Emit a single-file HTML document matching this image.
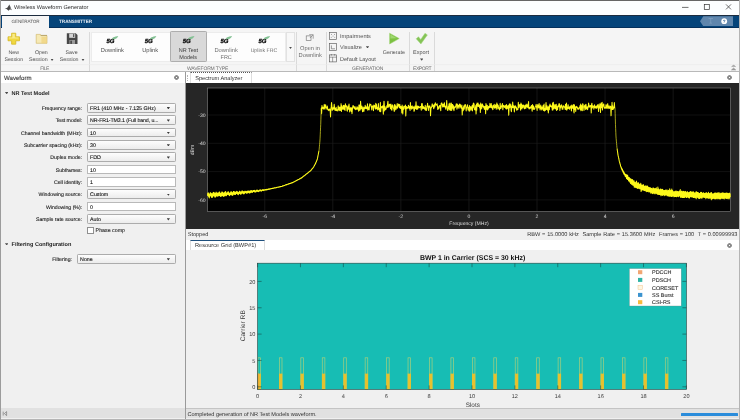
<!DOCTYPE html>
<html lang="en">
<head>
<meta charset="utf-8">
<title>Wireless Waveform Generator</title>
<style>
html,body{margin:0;padding:0;}
body{width:740px;height:420px;overflow:hidden;background:#f0f0f0;position:relative;
 font-family:"Liberation Sans",sans-serif;color:#3a3a3a;font-size:5.2px;line-height:1;text-rendering:geometricPrecision;}
div,span,i{position:absolute;box-sizing:border-box;white-space:nowrap;}
svg{position:absolute;left:0;top:0;overflow:visible;}
/* title bar */
#title{left:0;top:0;width:740px;height:15px;background:#fcfeff;border-top:0.9px solid #666;}
#title .t{left:14px;top:4.7px;font-size:5.55px;color:#2b2b2b;}
/* tab bar */
#tabs{left:0;top:14.6px;width:740px;height:13px;background:#05447a;border-top:1px solid #1c2c3f;border-bottom:0.9px solid #04305c;}
#tabs .g{left:2px;top:0;width:47px;height:13px;margin-top:0.2px;background:#f5f5f5;color:#555;font-size:4.6px;text-align:center;line-height:11.4px;letter-spacing:-0.05px;}
#tabs .tr{left:59px;top:0;height:13px;color:#e8eef5;font-size:4.7px;line-height:11.4px;font-weight:bold;letter-spacing:-0.05px;}
#qa{left:700px;top:16.2px;width:33px;height:10px;background:#5f86ad;clip-path:polygon(0 50%,10% 0,100% 0,100% 100%,10% 100%);}
/* toolstrip */
#strip{left:0;top:28px;width:740px;height:44px;background:#f5f5f5;border-bottom:1px solid #b9b9b9;}
.sep{top:32px;width:1px;height:39px;background:#dadada;}
.btxt{font-size:5.25px;color:#505050;text-align:center;transform:translateX(-50%);}
.sec{font-size:5.0px;color:#6c6c6c;top:66.6px;transform:translateX(-50%);letter-spacing:-0.02px;}
.dn{width:3.4px;height:2.3px;background:#4a4a4a;clip-path:polygon(0 0,100% 0,50% 100%);}
#gal{left:90.5px;top:31.5px;width:195px;height:30.7px;background:#fdfdfd;border:0.5px solid #ececec;}
#galbtn{left:285.5px;top:31.5px;width:9.5px;height:30.7px;background:#f8f8f8;border:0.5px solid #e2e2e2;}
#sel{left:169.6px;top:31.4px;width:37.6px;height:30.8px;background:#d9d9d9;border:0.6px solid #aeaeae;border-radius:1.2px;}
.g5{font-size:6px;font-weight:bold;font-style:italic;color:#050505;letter-spacing:-0.1px;-webkit-text-stroke:0.35px #111;}
/* panels */
#lhead{left:1px;top:72px;width:184px;height:10.5px;background:#fff;}
#lhead .t{left:3px;top:4.3px;font-size:6.1px;color:#333;-webkit-text-stroke:0.12px #444;}
#lborder{left:0;top:0;width:1.1px;height:420px;background:#9c9c9c;z-index:5;}
#rborder{left:739px;top:0;width:1px;height:420px;background:#b4b4b4;z-index:5;}
#lsplit{left:184.6px;top:72px;width:1.2px;height:348px;background:#9a9a9a;}
#lfoot{left:1px;top:408.3px;width:184px;height:10px;background:#e1e1e1;}
#bottomline{left:0;top:418.7px;width:740px;height:1.3px;background:#b5b5b5;}
.h{font-weight:bold;font-size:5.55px;color:#222;left:11.5px;}
.tri{left:4.9px;width:3.6px;height:2.3px;background:#4a4a4a;clip-path:polygon(0 0,100% 0,50% 100%);}
.lab{left:0;width:82.1px;text-align:right;font-size:5.17px;color:#111;-webkit-text-stroke:0.12px #333;height:9.5px;line-height:9.9px;padding-top:2px;}
.fld{left:87px;width:88.6px;height:9.5px;font-size:5.25px;color:#0a0a0a;-webkit-text-stroke:0.1px #222;line-height:9.3px;}
.fld span{left:2.1px;top:1px;}
.dd{background:linear-gradient(#fdfdfd,#ececec);border:0.6px solid #acacac;border-radius:1.2px;}
.ed{background:#fff;border:0.55px solid #b9b9b9;}
.arr{right:4.6px;top:3.1px;width:3.3px;height:2.3px;background:#3a3a3a;clip-path:polygon(0 0,100% 0,50% 100%);}
/* right side */
#rtab1{left:186px;top:72px;width:554px;height:11px;background:#fff;}
#tabSA{left:190px;top:72.4px;width:61.5px;height:10.6px;background:#fff;border:0.5px solid #dedede;border-bottom:none;border-top:0.8px dotted #555;}
#tabSA .t{left:4.2px;top:3.5px;color:#444;font-size:5.62px;color:#333;}
#spec{left:186px;top:83px;width:552.8px;height:146px;background:#262626;}
#stat1{left:186px;top:229px;width:554px;height:11px;background:#f0f0f0;}
#stat1 .l{left:1.7px;top:3.8px;font-size:5.55px;color:#333;}
#stat1 .r{right:2.6px;top:3.8px;font-size:5.6px;word-spacing:0.25px;color:#333;}
#rtab2{left:186px;top:240px;width:554px;height:10.1px;background:#fff;}
#tabRG{left:190px;top:240px;width:74.6px;height:10.1px;background:#fff;border:0.5px solid #dedede;border-bottom:none;border-top:1.3px solid #1e4f7d;}
#tabRG .t{left:3.9px;top:3.2px;font-size:5.7px;color:#333;}
#stat2{left:186px;top:408.3px;width:554px;height:10px;background:#e1e1e1;border-top:0.6px solid #c4c4c4;}
#stat2 .l{left:1.4px;top:3.5px;font-size:5.59px;color:#333;}
#prog{left:681.2px;top:413.2px;width:56.4px;height:2.5px;background:#2a8cdb;border-radius:0.6px;}
.gear{width:5.4px;height:5.4px;border-radius:50%;margin:-0.4px 0 0 -0.4px;background:radial-gradient(circle,#fff 0,#fff 0.55px,#8a8a8a 0.95px,#8a8a8a 2.15px,rgba(138,138,138,0) 2.6px);}
svg text{font-family:"Liberation Sans",sans-serif;text-rendering:geometricPrecision;}
</style>
</head>
<body>
<div id="wrap" style="left:0;top:0;width:740px;height:420px;will-change:transform;">
<!-- title bar -->
<div id="title">
  <svg width="740" height="15" viewBox="0 0 740 15">
    <path d="M4.8 7.7 L7.3 6.7 L9.4 3.5 L11.7 9.3 L10 8.3 L8.6 9.7 L6.6 8 Z" fill="#484848"/>
    <path d="M9.4 3.5 L11.7 9.3 L10.2 7.4 Z" fill="#8a8a8a"/>
    <line x1="682" y1="6.4" x2="688.5" y2="6.4" stroke="#333" stroke-width="0.7"/>
    <rect x="704.3" y="3.4" width="5" height="5" fill="none" stroke="#333" stroke-width="0.7"/>
    <path d="M726 3.4 L731 8.4 M731 3.4 L726 8.4" stroke="#333" stroke-width="0.7" fill="none"/>
  </svg>
  <span class="t">Wireless Waveform Generator</span>
</div>
<!-- tab bar -->
<div id="tabs">
  <div class="g">GENERATOR</div>
  <div class="tr">TRANSMITTER</div>
</div>
<div id="qa"></div>
<svg width="740" height="420" viewBox="0 0 740 420" style="z-index:3">
  <circle cx="724.2" cy="21.2" r="2.9" fill="#fff"/>
  <text x="724.2" y="22.9" font-size="4.6" font-weight="bold" text-anchor="middle" fill="#3c6a9a">?</text>
  <path d="M708.5 18.5 h4.5 M710.7 18.5 v4.5 M709.4 23.2 h2.6" stroke="#7fa0c2" stroke-width="0.7" fill="none"/>
</svg>

<!-- toolstrip -->
<div id="strip"></div>
<div id="gal"></div>
<div id="galbtn"></div>
<div id="sel"></div>
<div class="sep" style="left:88.5px"></div>
<div class="sep" style="left:295.6px"></div>
<div class="sep" style="left:325.6px"></div>
<div class="sep" style="left:409.3px"></div>
<div class="sep" style="left:434px"></div>

<svg width="740" height="420" viewBox="0 0 740 420" style="z-index:2">
  <!-- New: yellow plus -->
  <path d="M11.6 33.2 h4.2 v3.6 h3.7 v4 h-3.7 v3.4 h-4.2 v-3.4 h-3.6 v-4 h3.6 z" fill="#f0d840" stroke="#d2b318" stroke-width="0.7"/>
  <path d="M12.4 34 h2.4 v3.6 h3.6 v1 h-9.6 v-1 h3.6 z" fill="#faf0a0" opacity="0.8"/>
  <!-- Open: folder -->
  <path d="M36.2 34.4 h4.2 l1 1.3 h5.6 v7.6 h-10.8 z" fill="#f6e9b4" stroke="#cdb160" stroke-width="0.6"/>
  <path d="M40.6 35.4 h6.4" stroke="#a89250" stroke-width="0.7"/>
  <path d="M41.4 37 h5.6 v6.3 h-5.6 z" fill="#efd27a" opacity="0.7"/>
  <!-- Save: floppy -->
  <path d="M66.8 33.3 h9 l1.7 1.7 v8.9 h-10.7 z" fill="#474747"/>
  <rect x="69.2" y="33.6" width="6" height="4.2" fill="#d6d6d6"/>
  <rect x="73" y="34.1" width="1.3" height="2.9" fill="#5a5a5a"/>
  <rect x="69.4" y="40" width="5.6" height="3.9" fill="#9b9b9b"/>
  <rect x="70.3" y="40.7" width="1.7" height="3.2" fill="#4a4a4a"/>
  <!-- 5G swooshes -->
  <g fill="#82c092">
    <path d="M111.7 39.6 L112.9 37.5 Q115.6 36.2 118.3 36.1 Q117.6 37.6 116.0 38.7 Z"/>
    <path d="M149.8 39.6 L151.0 37.5 Q153.7 36.2 156.4 36.1 Q155.7 37.6 154.1 38.7 Z"/>
    <path d="M187.9 39.6 L189.1 37.5 Q191.8 36.2 194.5 36.1 Q193.8 37.6 192.2 38.7 Z"/>
    <path d="M225.5 39.6 L226.7 37.5 Q229.4 36.2 232.1 36.1 Q231.4 37.6 229.8 38.7 Z"/>
    <path d="M263.5 39.6 L264.7 37.5 Q267.4 36.2 270.1 36.1 Q269.4 37.6 267.8 38.7 Z"/>
  </g>
  <!-- Open in Downlink icon -->
  <g fill="none" stroke="#6b6b6b" stroke-width="0.6">
    <rect x="306.2" y="35.9" width="4.8" height="4.5"/>
    <path d="M309.2 34.7 h4 v4 M313 34.9 l-3.1 3.1"/>
  </g>
  <!-- Impairments / Visualize / Default Layout icons -->
  <g fill="none" stroke="#5a5a5a" stroke-width="0.65">
    <rect x="329.4" y="32.4" width="7.2" height="7"/>
    <path d="M331 34 l1.2 1.2 M335 34 l-1.2 1.2 M331 37.8 l1.2 -1.2 M335 37.8 l-1.2 -1.2" stroke-width="0.5"/>
    <rect x="329.4" y="43.6" width="7.2" height="7"/>
    <path d="M331.4 45.4 v3.4 h3.6" stroke-width="0.6"/>
    <rect x="329.4" y="54.9" width="7.2" height="7"/>
    <path d="M329.4 57.2 h7.2 M332.6 57.2 v4.7 M331.4 54 v1.6 M334.6 54 v1.6" stroke-width="0.55"/>
  </g>
  <!-- Generate -->
  <path d="M389.6 33.2 L399.2 38.6 L389.6 44 Z" fill="#7cc142" stroke="#9ad06a" stroke-width="0.5"/>
  <path d="M390.4 34.6 L396.8 38.3 L390.4 38.6 Z" fill="#a8dc7c" opacity="0.8"/>
  <!-- Export check -->
  <path d="M416.2 38.8 L418.5 36.8 L420.7 39.5 L425 33.3 L427.4 34.9 L420.9 44 Z" fill="#84c356" stroke="#a3d67c" stroke-width="0.5"/>
  <!-- collapse icon -->
  <path d="M731.5 66.7 l2.1 -1.6 l2.1 1.6 M731.5 69.9 l2.1 -1.8 l2.1 1.8 z" fill="#a2a2a2" stroke="#8e8e8e" stroke-width="0.6"/>
  <line x1="1" y1="64.6" x2="739" y2="64.6" stroke="#ebebeb" stroke-width="0.6"/>
</svg>

<span class="g5" style="left:106.6px;top:38.9px">5G</span>
<span class="g5" style="left:144.7px;top:38.9px">5G</span>
<span class="g5" style="left:182.8px;top:38.9px">5G</span>
<span class="g5" style="left:220.4px;top:38.9px">5G</span>
<span class="g5" style="left:258.4px;top:38.9px">5G</span>

<span class="btxt" style="left:13.7px;top:51.0px">New</span>
<span class="btxt" style="left:13.8px;top:57.8px">Session</span>
<span class="btxt" style="left:41.3px;top:51.0px">Open</span>
<span class="btxt" style="left:38.3px;top:57.8px">Session</span>
<i class="dn" style="left:50.4px;top:58.6px"></i>
<span class="btxt" style="left:71.6px;top:51.0px">Save</span>
<span class="btxt" style="left:69.2px;top:57.8px">Session</span>
<i class="dn" style="left:81.3px;top:58.6px"></i>
<span class="sec" style="left:44.5px;letter-spacing:-0.5px">FILE</span>

<span class="btxt" style="left:112.3px;top:48.9px;font-size:5.72px">Downlink</span>
<span class="btxt" style="left:150.1px;top:48.9px;font-size:5.72px">Uplink</span>
<span class="btxt" style="left:188.4px;top:48.9px;font-size:5.5px;color:#3c3c3c">NR Test</span>
<span class="btxt" style="left:188.2px;top:55.5px;font-size:5.5px;color:#3c3c3c">Models</span>
<span class="btxt" style="left:226.1px;top:48.9px;font-size:5.78px;color:#6e6e6e">Downlink</span>
<span class="btxt" style="left:226.2px;top:55.5px;font-size:5.5px;color:#6e6e6e">FRC</span>
<span class="btxt" style="left:263.9px;top:48.9px;font-size:5.2px;color:#6e6e6e">Uplink FRC</span>
<i class="dn" style="left:288.8px;top:46.6px"></i>
<span class="sec" style="left:207.6px;letter-spacing:-0.15px">WAVEFORM TYPE</span>

<span class="btxt" style="left:310px;top:46.7px;font-size:5.7px;color:#6c6c6c">Open in</span>
<span class="btxt" style="left:310.2px;top:54.3px;font-size:5.74px;color:#6c6c6c">Downlink</span>

<span class="btxt" style="left:340px;top:35.3px;transform:none;font-size:5.62px">Impairments</span>
<span class="btxt" style="left:340px;top:45.5px;transform:none;font-size:5.5px">Visualize</span>
<i class="dn" style="left:365.8px;top:46.2px"></i>
<span class="btxt" style="left:340px;top:58.1px;transform:none;font-size:5.57px">Default Layout</span>
<span class="btxt" style="left:393.9px;top:51.0px;font-size:5.35px">Generate</span>
<span class="sec" style="left:367.6px;letter-spacing:-0.16px">GENERATION</span>
<span class="btxt" style="left:421px;top:51.0px;font-size:5.5px">Export</span>
<i class="dn" style="left:420px;top:58.4px"></i>
<span class="sec" style="left:422px;letter-spacing:-0.4px">EXPORT</span>

<!-- left panel -->
<div id="lhead"><span class="t">Waveform</span></div>
<div class="gear" style="left:174.2px;top:74.9px"></div>
<div id="lborder"></div><div id="rborder"></div>
<i class="tri" style="top:91.9px"></i>
<span class="h" style="top:91.8px">NR Test Model</span>
<div class="lab" style="top:103.00px">Frequency range:</div>
<div class="fld dd" style="top:103.00px"><span>FR1 (410 MHz - 7.125 GHz)</span><i class="arr"></i></div>
<div class="lab" style="top:115.35px">Test model:</div>
<div class="fld dd" style="top:115.35px"><span style="letter-spacing:-0.09px">NR-FR1-TM3.1 (Full band, u...</span><i class="arr"></i></div>
<div class="lab" style="top:127.70px">Channel bandwidth (MHz):</div>
<div class="fld dd" style="top:127.70px"><span>10</span><i class="arr"></i></div>
<div class="lab" style="top:140.05px">Subcarrier spacing (kHz):</div>
<div class="fld dd" style="top:140.05px"><span>30</span><i class="arr"></i></div>
<div class="lab" style="top:152.40px">Duplex mode:</div>
<div class="fld dd" style="top:152.40px"><span>FDD</span><i class="arr"></i></div>
<div class="lab" style="top:164.75px">Subframes:</div>
<div class="fld ed" style="top:164.75px"><span>10</span></div>
<div class="lab" style="top:177.10px">Cell identity:</div>
<div class="fld ed" style="top:177.10px"><span>1</span></div>
<div class="lab" style="top:189.45px">Windowing source:</div>
<div class="fld dd" style="top:189.45px"><span>Custom</span><i class="arr"></i></div>
<div class="lab" style="top:201.80px">Windowing (%):</div>
<div class="fld ed" style="top:201.80px"><span>0</span></div>
<div class="lab" style="top:214.15px">Sample rate source:</div>
<div class="fld dd" style="top:214.15px"><span>Auto</span><i class="arr"></i></div>
<div style="left:87.4px;top:227.1px;width:6.5px;height:6.5px;background:#fff;border:0.6px solid #8f8f8f;"></div>
<span style="left:95.6px;top:229.2px;font-size:5.3px;color:#161616;-webkit-text-stroke:0.1px #333">Phase comp</span>
<i class="tri" style="top:243.2px"></i>
<span class="h" style="top:242.9px">Filtering Configuration</span>
<div class="lab" style="top:254.2px;width:72px">Filtering:</div>
<div class="fld dd" style="top:254.2px;left:77px;width:98.6px"><span>None</span><i class="arr"></i></div>
<div id="lfoot"></div>
<svg width="740" height="420" viewBox="0 0 740 420">
  <path d="M3.2 411.6 v4 M6.6 411.6 l-2.2 2 l2.2 2 z" fill="none" stroke="#666" stroke-width="0.6"/>
</svg>
<div id="lsplit"></div>

<!-- right: spectrum analyzer -->
<div id="rtab1"></div>
<div id="tabSA"><span class="t">Spectrum Analyzer</span></div>
<div class="gear" style="left:726.9px;top:74.9px"></div>
<div id="spec"></div>
<div style="left:187.3px;top:74.5px;width:0;height:6.5px;border-left:0.8px dotted #b5b5b5;"></div>
<div style="left:187.3px;top:242.6px;width:0;height:6px;border-left:0.8px dotted #b5b5b5;"></div>
<svg width="740" height="420" viewBox="0 0 740 420">
  <rect x="207.6" y="88" width="522.7" height="123.4" fill="#000"/>
  <g stroke="#1f1f1f" stroke-width="0.55">
<line x1="264.77" y1="88.0" x2="264.77" y2="211.4" stroke="#262626"/>
<line x1="332.83" y1="88.0" x2="332.83" y2="211.4" stroke="#262626"/>
<line x1="400.89" y1="88.0" x2="400.89" y2="211.4" stroke="#262626"/>
<line x1="468.95" y1="88.0" x2="468.95" y2="211.4" stroke="#262626"/>
<line x1="537.01" y1="88.0" x2="537.01" y2="211.4" stroke="#262626"/>
<line x1="605.07" y1="88.0" x2="605.07" y2="211.4" stroke="#262626"/>
<line x1="673.13" y1="88.0" x2="673.13" y2="211.4" stroke="#262626"/>
<line x1="207.6" y1="115.00" x2="730.3" y2="115.00"/>
<line x1="207.6" y1="143.30" x2="730.3" y2="143.30"/>
<line x1="207.6" y1="171.60" x2="730.3" y2="171.60"/>
<line x1="207.6" y1="199.90" x2="730.3" y2="199.90"/>
  </g>
  <rect x="207.6" y="88" width="522.7" height="123.4" fill="none" stroke="#8a8a8a" stroke-width="0.55"/>
  <polygon points="207.60,193.14 207.76,193.10 207.92,193.14 208.08,193.25 208.24,193.44 208.40,193.67 208.56,193.91 208.72,194.13 208.88,194.32 209.04,194.43 209.20,194.46 209.36,194.40 209.52,194.26 209.68,194.06 209.84,193.81 210.00,193.54 210.16,193.29 210.32,193.08 210.48,192.94 210.64,192.88 210.80,192.91 210.96,193.02 211.12,193.20 211.28,193.43 211.44,193.67 211.60,193.90 211.76,194.09 211.92,194.21 212.08,194.25 212.24,194.20 212.40,194.07 212.56,193.86 212.72,193.62 212.88,193.35 213.04,193.10 213.20,192.88 213.36,192.74 213.52,192.67 213.68,192.69 213.84,192.79 214.00,192.97 214.16,193.19 214.32,193.43 214.48,193.66 214.64,193.85 214.80,193.98 214.96,194.03 215.12,193.99 215.28,193.87 215.44,193.67 215.60,193.43 215.76,193.16 215.92,192.90 216.08,192.69 216.24,192.53 216.40,192.46 216.56,192.47 216.72,192.56 216.88,192.73 217.04,192.95 217.20,193.19 217.36,193.42 217.52,193.62 217.68,193.76 217.84,193.81 218.00,193.79 218.16,193.67 218.32,193.49 218.48,193.25 218.64,193.00 218.80,192.75 218.96,192.53 219.12,192.38 219.28,192.30 219.44,192.31 219.60,192.40 219.76,192.56 219.92,192.78 220.08,193.01 220.24,193.24 220.40,193.43 220.56,193.57 220.72,193.63 220.88,193.61 221.04,193.51 221.20,193.34 221.36,193.12 221.52,192.88 221.68,192.64 221.84,192.43 222.00,192.28 222.16,192.20 222.32,192.20 222.48,192.28 222.64,192.42 222.80,192.62 222.96,192.84 223.12,193.06 223.28,193.25 223.44,193.38 223.60,193.45 223.76,193.44 223.92,193.35 224.08,193.19 224.24,192.99 224.40,192.76 224.56,192.53 224.72,192.33 224.88,192.18 225.04,192.09 225.20,192.09 225.36,192.15 225.52,192.29 225.68,192.47 225.84,192.68 226.00,192.88 226.16,193.07 226.32,193.20 226.48,193.27 226.64,193.26 226.80,193.19 226.96,193.04 227.12,192.85 227.28,192.64 227.44,192.42 227.60,192.22 227.76,192.08 227.92,191.99 228.08,191.98 228.24,192.03 228.40,192.15 228.56,192.32 228.72,192.51 228.88,192.71 229.04,192.88 229.20,193.02 229.36,193.09 229.52,193.09 229.68,193.02 229.84,192.89 230.00,192.71 230.16,192.51 230.32,192.30 230.48,192.12 230.64,191.97 230.80,191.89 230.96,191.87 231.12,191.91 231.28,192.02 231.44,192.17 231.60,192.35 231.76,192.54 231.92,192.70 232.08,192.83 232.24,192.90 232.40,192.91 232.56,192.85 232.72,192.74 232.88,192.57 233.04,192.38 233.20,192.19 233.36,192.01 233.52,191.87 233.68,191.78 233.84,191.76 234.00,191.79 234.16,191.89 234.32,192.03 234.48,192.20 234.64,192.37 234.80,192.53 234.96,192.65 235.12,192.72 235.28,192.73 235.44,192.68 235.60,192.58 235.76,192.43 235.92,192.25 236.08,192.07 236.24,191.90 236.40,191.77 236.56,191.68 236.72,191.65 236.88,191.68 237.04,191.76 237.20,191.89 237.36,192.04 237.52,192.20 237.68,192.35 237.84,192.47 238.00,192.54 238.16,192.55 238.32,192.51 238.48,192.42 238.64,192.28 238.80,192.12 238.96,191.95 239.12,191.79 239.28,191.66 239.44,191.57 239.60,191.54 239.76,191.56 239.92,191.63 240.08,191.75 240.24,191.89 240.40,192.04 240.56,192.17 240.72,192.29 240.88,192.36 241.04,192.38 241.20,192.34 241.36,192.26 241.52,192.13 241.68,191.97 241.84,191.80 242.00,191.65 242.16,191.52 242.32,191.42 242.48,191.38 242.64,191.39 242.80,191.44 242.96,191.54 243.12,191.66 243.28,191.79 243.44,191.91 243.60,192.00 243.76,192.06 243.92,192.08 244.08,192.04 244.24,191.96 244.40,191.85 244.56,191.70 244.72,191.55 244.88,191.40 245.04,191.28 245.20,191.19 245.36,191.15 245.52,191.15 245.68,191.19 245.84,191.27 246.00,191.38 246.16,191.50 246.32,191.61 246.48,191.70 246.64,191.75 246.80,191.77 246.96,191.74 247.12,191.67 247.28,191.57 247.44,191.44 247.60,191.30 247.76,191.16 247.92,191.04 248.08,190.96 248.24,190.91 248.40,190.91 248.56,190.94 248.72,191.01 248.88,191.11 249.04,191.21 249.20,191.31 249.36,191.39 249.52,191.45 249.68,191.46 249.84,191.44 250.00,191.38 250.16,191.28 250.32,191.17 250.48,191.04 250.64,190.91 250.80,190.80 250.96,190.72 251.12,190.68 251.28,190.67 251.44,190.70 251.60,190.75 251.76,190.83 251.92,190.93 252.08,191.01 252.24,191.09 252.40,191.14 252.56,191.15 252.72,191.13 252.88,191.08 253.04,191.00 253.20,190.89 253.36,190.78 253.52,190.66 253.68,190.56 253.84,190.49 254.00,190.44 254.16,190.43 254.32,190.45 254.48,190.50 254.64,190.57 254.80,190.64 254.96,190.72 255.12,190.79 255.28,190.83 255.44,190.85 255.60,190.83 255.76,190.78 255.92,190.71 256.08,190.62 256.24,190.52 256.40,190.41 256.56,190.32 256.72,190.25 256.88,190.21 257.04,190.19 257.20,190.20 257.36,190.24 257.52,190.30 257.68,190.37 257.84,190.43 258.00,190.49 258.16,190.52 258.32,190.54 258.48,190.52 258.64,190.48 258.80,190.42 258.96,190.34 259.12,190.25 259.28,190.16 259.44,190.08 259.60,190.02 259.76,189.98 259.92,189.96 260.08,189.97 260.24,190.00 260.40,190.04 260.56,190.09 260.72,190.15 260.88,190.19 261.04,190.22 261.20,190.23 261.36,190.22 261.52,190.19 261.68,190.14 261.84,190.07 262.00,189.99 262.16,189.92 262.32,189.85 262.48,189.80 262.64,189.76 262.80,189.74 262.96,189.74 263.12,189.76 263.28,189.79 263.44,189.83 263.60,189.87 263.76,189.90 263.92,189.93 264.08,189.93 264.24,189.92 264.40,189.89 264.56,189.85 264.72,189.80 264.88,189.73 265.04,189.65 265.20,189.58 265.36,189.52 265.52,189.47 265.68,189.44 265.84,189.42 266.00,189.42 266.16,189.42 266.32,189.43 266.48,189.44 266.64,189.45 266.80,189.45 266.96,189.43 267.12,189.40 267.28,189.37 267.44,189.32 267.60,189.26 267.76,189.20 267.92,189.14 268.08,189.08 268.24,189.03 268.40,188.99 268.56,188.96 268.72,188.93 268.88,188.92 269.04,188.91 269.20,188.91 269.36,188.90 269.52,188.90 269.68,188.88 269.84,188.86 270.00,188.84 270.16,188.80 270.32,188.76 270.48,188.71 270.64,188.67 270.80,188.62 270.96,188.58 271.12,188.54 271.28,188.50 271.44,188.47 271.60,188.43 271.76,188.41 271.92,188.38 272.08,188.36 272.24,188.34 272.40,188.32 272.56,188.30 272.72,188.27 272.88,188.24 273.04,188.21 273.20,188.17 273.36,188.12 273.52,188.08 273.68,188.03 273.84,187.98 274.00,187.93 274.16,187.89 274.32,187.85 274.48,187.82 274.64,187.79 274.80,187.77 274.96,187.75 275.12,187.73 275.28,187.71 275.44,187.69 275.60,187.66 275.76,187.63 275.92,187.60 276.08,187.56 276.24,187.51 276.40,187.47 276.56,187.42 276.72,187.37 276.88,187.32 277.04,187.28 277.20,187.24 277.36,187.21 277.52,187.18 277.68,187.16 277.84,187.14 278.00,187.12 278.16,187.10 278.32,187.08 278.48,187.05 278.64,187.02 278.80,186.99 278.96,186.95 279.12,186.90 279.28,186.86 279.44,186.81 279.60,186.76 279.76,186.71 279.92,186.67 280.08,186.63 280.24,186.60 280.40,186.57 280.56,186.55 280.72,186.53 280.88,186.51 281.04,186.49 281.20,186.47 281.36,186.43 281.52,186.38 281.68,186.32 281.84,186.26 282.00,186.20 282.16,186.13 282.32,186.06 282.48,185.99 282.64,185.92 282.80,185.86 282.96,185.80 283.12,185.74 283.28,185.69 283.44,185.65 283.60,185.60 283.76,185.56 283.92,185.52 284.08,185.48 284.24,185.43 284.40,185.38 284.56,185.32 284.72,185.26 284.88,185.20 285.04,185.13 285.20,185.06 285.36,184.99 285.52,184.92 285.68,184.86 285.84,184.80 286.00,184.74 286.16,184.69 286.32,184.64 286.48,184.60 286.64,184.56 286.80,184.52 286.96,184.47 287.12,184.43 287.28,184.38 287.44,184.32 287.60,184.26 287.76,184.20 287.92,184.13 288.08,184.06 288.24,183.99 288.40,183.92 288.56,183.86 288.72,183.79 288.88,183.74 289.04,183.69 289.20,183.64 289.36,183.60 289.52,183.55 289.68,183.51 289.84,183.47 290.00,183.42 290.16,183.38 290.32,183.32 290.48,183.26 290.64,183.20 290.80,183.13 290.96,183.06 291.12,182.99 291.28,182.92 291.44,182.85 291.60,182.79 291.76,182.74 291.92,182.68 292.08,182.64 292.24,182.59 292.40,182.55 292.56,182.51 292.72,182.47 292.88,182.41 293.04,182.33 293.20,182.25 293.36,182.16 293.52,182.07 293.68,181.97 293.84,181.87 294.00,181.77 294.16,181.67 294.32,181.58 294.48,181.49 294.64,181.40 294.80,181.32 294.96,181.24 295.12,181.17 295.28,181.10 295.44,181.03 295.60,180.96 295.76,180.88 295.92,180.80 296.08,180.72 296.24,180.63 296.40,180.54 296.56,180.45 296.72,180.35 296.88,180.25 297.04,180.15 297.20,180.05 297.36,179.96 297.52,179.88 297.68,179.79 297.84,179.72 298.00,179.64 298.16,179.57 298.32,179.50 298.48,179.43 298.64,179.36 298.80,179.28 298.96,179.20 299.12,179.11 299.28,179.02 299.44,178.92 299.60,178.82 299.76,178.72 299.92,178.63 300.08,178.53 300.24,178.44 300.40,178.35 300.56,178.27 300.72,178.19 300.88,178.12 301.04,178.05 301.20,177.98 301.36,177.89 301.52,177.78 301.68,177.66 301.84,177.54 302.00,177.42 302.16,177.29 302.32,177.15 302.48,177.02 302.64,176.88 302.80,176.74 302.96,176.61 303.12,176.48 303.28,176.35 303.44,176.23 303.60,176.11 303.76,176.00 303.92,175.89 304.08,175.78 304.24,175.67 304.40,175.56 304.56,175.45 304.72,175.33 304.88,175.20 305.04,175.07 305.20,174.94 305.36,174.80 305.52,174.67 305.68,174.53 305.84,174.39 306.00,174.26 306.16,174.14 306.32,174.01 306.48,173.90 306.64,173.78 306.80,173.67 306.96,173.57 307.12,173.46 307.28,173.35 307.44,173.23 307.60,173.11 307.76,172.99 307.92,172.85 308.08,172.71 308.24,172.56 308.40,172.41 308.56,172.27 308.72,172.12 308.88,171.98 309.04,171.84 309.20,171.71 309.36,171.58 309.52,171.46 309.68,171.34 309.84,171.22 310.00,171.10 310.16,170.98 310.32,170.85 310.48,170.72 310.64,170.59 310.80,170.45 310.96,170.25 311.12,170.04 311.28,169.84 311.44,169.63 311.60,169.43 311.76,169.23 311.92,169.03 312.08,168.84 312.24,168.65 312.40,168.47 312.56,168.29 312.72,168.11 312.88,167.94 313.04,167.76 313.20,167.57 313.36,167.35 313.52,167.07 313.68,166.79 313.84,166.50 314.00,166.21 314.16,165.91 314.32,165.62 314.48,165.32 314.64,165.03 314.80,164.75 314.96,164.47 315.12,164.19 315.28,163.92 315.44,163.57 315.60,163.20 315.76,162.83 315.92,162.47 316.08,162.09 316.24,161.72 316.40,161.34 316.56,160.95 316.72,160.56 316.88,160.17 317.04,159.77 317.20,159.38 317.36,158.99 317.52,158.25 317.68,157.39 317.84,156.54 318.00,155.70 318.16,154.86 318.32,154.03 318.48,153.20 318.64,152.36 318.80,151.53 318.96,150.69 319.12,149.73 319.28,147.96 319.44,146.18 319.60,144.39 319.76,142.60 319.92,140.81 320.08,138.19 320.24,134.75 320.40,131.31 320.56,127.88 320.72,124.31 320.88,119.78 321.04,115.25 321.20,110.73 321.20,110.90 321.04,115.42 320.88,119.95 320.72,124.48 320.56,128.04 320.40,131.48 320.24,134.92 320.08,138.36 319.92,140.98 319.76,142.77 319.60,144.56 319.44,146.34 319.28,148.13 319.12,149.90 318.96,150.86 318.80,151.70 318.64,152.53 318.48,153.36 318.32,154.20 318.16,155.03 318.00,155.87 317.84,156.71 317.68,157.56 317.52,158.41 317.36,159.15 317.20,159.55 317.04,159.94 316.88,160.34 316.72,160.73 316.56,161.12 316.40,161.51 316.24,161.89 316.08,162.26 315.92,162.63 315.76,163.00 315.60,163.37 315.44,163.74 315.28,164.09 315.12,164.36 314.96,164.64 314.80,164.92 314.64,165.20 314.48,165.49 314.32,165.78 314.16,166.08 314.00,166.37 313.84,166.67 313.68,166.96 313.52,167.24 313.36,167.52 313.20,167.74 313.04,167.92 312.88,168.10 312.72,168.28 312.56,168.46 312.40,168.64 312.24,168.82 312.08,169.01 311.92,169.20 311.76,169.40 311.60,169.60 311.44,169.80 311.28,170.01 311.12,170.21 310.96,170.42 310.80,170.62 310.64,170.76 310.48,170.89 310.32,171.02 310.16,171.15 310.00,171.27 309.84,171.39 309.68,171.51 309.52,171.63 309.36,171.75 309.20,171.88 309.04,172.01 308.88,172.15 308.72,172.29 308.56,172.43 308.40,172.58 308.24,172.73 308.08,172.88 307.92,173.02 307.76,173.16 307.60,173.28 307.44,173.40 307.28,173.51 307.12,173.62 306.96,173.73 306.80,173.84 306.64,173.95 306.48,174.07 306.32,174.18 306.16,174.30 306.00,174.43 305.84,174.56 305.68,174.70 305.52,174.83 305.36,174.97 305.20,175.11 305.04,175.24 304.88,175.37 304.72,175.50 304.56,175.61 304.40,175.73 304.24,175.84 304.08,175.95 303.92,176.06 303.76,176.17 303.60,176.28 303.44,176.40 303.28,176.52 303.12,176.65 302.96,176.78 302.80,176.91 302.64,177.05 302.48,177.19 302.32,177.32 302.16,177.46 302.00,177.59 301.84,177.71 301.68,177.83 301.52,177.95 301.36,178.06 301.20,178.14 301.04,178.21 300.88,178.28 300.72,178.36 300.56,178.44 300.40,178.52 300.24,178.61 300.08,178.70 299.92,178.79 299.76,178.89 299.60,178.99 299.44,179.09 299.28,179.19 299.12,179.28 298.96,179.36 298.80,179.45 298.64,179.52 298.48,179.60 298.32,179.67 298.16,179.74 298.00,179.81 297.84,179.88 297.68,179.96 297.52,180.04 297.36,180.13 297.20,180.22 297.04,180.32 296.88,180.42 296.72,180.51 296.56,180.61 296.40,180.71 296.24,180.80 296.08,180.89 295.92,180.97 295.76,181.05 295.60,181.12 295.44,181.20 295.28,181.27 295.12,181.34 294.96,181.41 294.80,181.49 294.64,181.57 294.48,181.65 294.32,181.75 294.16,181.84 294.00,181.94 293.84,182.04 293.68,182.14 293.52,182.23 293.36,182.33 293.20,182.41 293.04,182.50 292.88,182.58 292.72,182.64 292.56,182.68 292.40,182.72 292.24,182.76 292.08,182.80 291.92,182.85 291.76,182.90 291.60,182.96 291.44,183.02 291.28,183.09 291.12,183.16 290.96,183.23 290.80,183.30 290.64,183.36 290.48,183.43 290.32,183.49 290.16,183.54 290.00,183.59 289.84,183.64 289.68,183.68 289.52,183.72 289.36,183.76 289.20,183.81 289.04,183.85 288.88,183.91 288.72,183.96 288.56,184.02 288.40,184.09 288.24,184.16 288.08,184.23 287.92,184.30 287.76,184.37 287.60,184.43 287.44,184.49 287.28,184.55 287.12,184.60 286.96,184.64 286.80,184.68 286.64,184.73 286.48,184.77 286.32,184.81 286.16,184.86 286.00,184.91 285.84,184.96 285.68,185.02 285.52,185.09 285.36,185.16 285.20,185.23 285.04,185.30 284.88,185.37 284.72,185.43 284.56,185.49 284.40,185.55 284.24,185.60 284.08,185.64 283.92,185.69 283.76,185.73 283.60,185.77 283.44,185.81 283.28,185.86 283.12,185.91 282.96,185.97 282.80,186.03 282.64,186.09 282.48,186.16 282.32,186.23 282.16,186.30 282.00,186.37 281.84,186.43 281.68,186.49 281.52,186.55 281.36,186.60 281.20,186.63 281.04,186.66 280.88,186.67 280.72,186.69 280.56,186.72 280.40,186.74 280.24,186.77 280.08,186.80 279.92,186.84 279.76,186.88 279.60,186.93 279.44,186.98 279.28,187.02 279.12,187.07 278.96,187.12 278.80,187.16 278.64,187.19 278.48,187.22 278.32,187.25 278.16,187.27 278.00,187.29 277.84,187.31 277.68,187.33 277.52,187.35 277.36,187.38 277.20,187.41 277.04,187.45 276.88,187.49 276.72,187.54 276.56,187.59 276.40,187.63 276.24,187.68 276.08,187.73 275.92,187.77 275.76,187.80 275.60,187.83 275.44,187.86 275.28,187.88 275.12,187.90 274.96,187.92 274.80,187.94 274.64,187.96 274.48,187.99 274.32,188.02 274.16,188.06 274.00,188.10 273.84,188.15 273.68,188.20 273.52,188.24 273.36,188.29 273.20,188.34 273.04,188.38 272.88,188.41 272.72,188.44 272.56,188.47 272.40,188.49 272.24,188.51 272.08,188.53 271.92,188.55 271.76,188.57 271.60,188.60 271.44,188.63 271.28,188.67 271.12,188.72 270.96,188.76 270.80,188.82 270.64,188.87 270.48,188.93 270.32,188.99 270.16,189.04 270.00,189.08 269.84,189.12 269.68,189.15 269.52,189.17 269.36,189.19 269.20,189.20 269.04,189.21 268.88,189.23 268.72,189.25 268.56,189.28 268.40,189.33 268.24,189.38 268.08,189.44 267.92,189.50 267.76,189.57 267.60,189.64 267.44,189.71 267.28,189.77 267.12,189.82 266.96,189.85 266.80,189.88 266.64,189.89 266.48,189.89 266.32,189.89 266.16,189.89 266.00,189.90 265.84,189.91 265.68,189.94 265.52,189.98 265.36,190.04 265.20,190.11 265.04,190.19 264.88,190.27 264.72,190.35 264.56,190.41 264.40,190.46 264.24,190.50 264.08,190.52 263.92,190.52 263.76,190.51 263.60,190.49 263.44,190.46 263.28,190.43 263.12,190.41 262.96,190.40 262.80,190.40 262.64,190.43 262.48,190.48 262.32,190.54 262.16,190.62 262.00,190.70 261.84,190.79 261.68,190.86 261.52,190.93 261.36,190.97 261.20,190.99 261.04,190.99 260.88,190.97 260.72,190.93 260.56,190.89 260.40,190.84 260.24,190.81 260.08,190.79 259.92,190.79 259.76,190.82 259.60,190.87 259.44,190.94 259.28,191.03 259.12,191.13 258.96,191.22 258.80,191.31 258.64,191.38 258.48,191.43 258.32,191.45 258.16,191.45 258.00,191.42 257.84,191.37 257.68,191.31 257.52,191.26 257.36,191.21 257.20,191.18 257.04,191.17 256.88,191.20 256.72,191.25 256.56,191.33 256.40,191.43 256.24,191.54 256.08,191.65 255.92,191.75 255.76,191.83 255.60,191.88 255.44,191.91 255.28,191.90 255.12,191.86 254.96,191.81 254.80,191.74 254.64,191.67 254.48,191.61 254.32,191.57 254.16,191.55 254.00,191.57 253.84,191.63 253.68,191.71 253.52,191.82 253.36,191.94 253.20,192.06 253.04,192.18 252.88,192.27 252.72,192.33 252.56,192.36 252.40,192.35 252.24,192.31 252.08,192.24 251.92,192.16 251.76,192.08 251.60,192.01 251.44,191.95 251.28,191.93 251.12,191.95 250.96,192.01 250.80,192.10 250.64,192.21 250.48,192.34 250.32,192.48 250.16,192.61 250.00,192.71 249.84,192.78 249.68,192.81 249.52,192.80 249.36,192.76 249.20,192.68 249.04,192.59 248.88,192.49 248.72,192.41 248.56,192.35 248.40,192.32 248.24,192.33 248.08,192.38 247.92,192.48 247.76,192.60 247.60,192.75 247.44,192.89 247.28,193.03 247.12,193.15 246.96,193.22 246.80,193.26 246.64,193.25 246.48,193.20 246.32,193.12 246.16,193.02 246.00,192.91 245.84,192.81 245.68,192.74 245.52,192.70 245.36,192.71 245.20,192.76 245.04,192.86 244.88,192.99 244.72,193.14 244.56,193.31 244.40,193.46 244.24,193.58 244.08,193.67 243.92,193.71 243.76,193.71 243.60,193.65 243.44,193.56 243.28,193.45 243.12,193.33 242.96,193.22 242.80,193.13 242.64,193.09 242.48,193.09 242.32,193.14 242.16,193.24 242.00,193.38 241.84,193.54 241.68,193.71 241.52,193.88 241.36,194.02 241.20,194.11 241.04,194.15 240.88,194.14 240.72,194.08 240.56,193.98 240.40,193.85 240.24,193.70 240.08,193.57 239.92,193.47 239.76,193.40 239.60,193.39 239.44,193.43 239.28,193.53 239.12,193.66 238.96,193.83 238.80,194.01 238.64,194.18 238.48,194.32 238.32,194.43 238.16,194.47 238.00,194.47 237.84,194.40 237.68,194.29 237.52,194.15 237.36,194.00 237.20,193.86 237.04,193.74 236.88,193.66 236.72,193.64 236.56,193.68 236.40,193.77 236.24,193.92 236.08,194.09 235.92,194.28 235.76,194.47 235.60,194.63 235.44,194.74 235.28,194.80 235.12,194.79 234.96,194.73 234.80,194.61 234.64,194.46 234.48,194.30 234.32,194.14 234.16,194.01 234.00,193.92 233.84,193.89 233.68,193.93 233.52,194.02 233.36,194.17 233.20,194.36 233.04,194.56 232.88,194.76 232.72,194.93 232.56,195.05 232.40,195.12 232.24,195.12 232.08,195.05 231.92,194.94 231.76,194.78 231.60,194.60 231.44,194.43 231.28,194.28 231.12,194.18 230.96,194.14 230.80,194.17 230.64,194.27 230.48,194.42 230.32,194.61 230.16,194.83 230.00,195.04 229.84,195.22 229.68,195.36 229.52,195.44 229.36,195.44 229.20,195.38 229.04,195.26 228.88,195.09 228.72,194.90 228.56,194.72 228.40,194.56 228.24,194.45 228.08,194.40 227.92,194.42 227.76,194.51 227.60,194.67 227.44,194.87 227.28,195.10 227.12,195.32 226.96,195.52 226.80,195.67 226.64,195.76 226.48,195.77 226.32,195.71 226.16,195.58 226.00,195.41 225.84,195.21 225.68,195.01 225.52,194.84 225.36,194.71 225.20,194.65 225.04,194.67 224.88,194.76 224.72,194.92 224.56,195.13 224.40,195.36 224.24,195.60 224.08,195.81 223.92,195.98 223.76,196.08 223.60,196.10 223.44,196.04 223.28,195.91 223.12,195.73 222.96,195.52 222.80,195.31 222.64,195.12 222.48,194.98 222.32,194.91 222.16,194.91 222.00,195.00 221.84,195.16 221.68,195.38 221.52,195.63 221.36,195.88 221.20,196.11 221.04,196.28 220.88,196.39 220.72,196.42 220.56,196.37 220.40,196.24 220.24,196.05 220.08,195.83 219.92,195.60 219.76,195.40 219.60,195.25 219.44,195.16 219.28,195.16 219.12,195.25 218.96,195.41 218.80,195.63 218.64,195.89 218.48,196.15 218.32,196.39 218.16,196.59 218.00,196.71 217.84,196.75 217.68,196.70 217.52,196.56 217.36,196.36 217.20,196.13 217.04,195.89 216.88,195.67 216.72,195.50 216.56,195.41 216.40,195.40 216.24,195.47 216.08,195.63 215.92,195.84 215.76,196.10 215.60,196.37 215.44,196.61 215.28,196.81 215.12,196.93 214.96,196.97 214.80,196.92 214.64,196.79 214.48,196.60 214.32,196.37 214.16,196.13 214.00,195.91 213.84,195.73 213.68,195.63 213.52,195.61 213.36,195.68 213.20,195.82 213.04,196.04 212.88,196.29 212.72,196.56 212.56,196.80 212.40,197.01 212.24,197.14 212.08,197.19 211.92,197.15 211.76,197.03 211.60,196.84 211.44,196.61 211.28,196.37 211.12,196.14 210.96,195.96 210.80,195.85 210.64,195.82 210.48,195.88 210.32,196.02 210.16,196.23 210.00,196.48 209.84,196.75 209.68,197.00 209.52,197.20 209.36,197.34 209.20,197.40 209.04,197.37 208.88,197.26 208.72,197.07 208.56,196.85 208.40,196.61 208.24,196.38 208.08,196.19 207.92,196.08 207.76,196.04 207.60,196.08" fill="#f7f320"/>
  <polygon points="615.00,107.92 615.16,113.36 615.32,118.80 615.48,124.24 615.64,128.28 615.80,132.12 615.96,135.96 616.12,138.24 616.28,140.00 616.44,141.76 616.60,143.52 616.76,145.28 616.92,147.04 617.08,148.48 617.24,149.60 617.40,150.72 617.56,151.84 617.72,152.96 617.88,154.08 618.04,155.10 618.20,155.85 618.36,156.60 618.52,157.34 618.68,158.09 618.84,158.84 619.00,159.58 619.16,160.31 619.32,161.03 619.48,161.75 619.64,162.29 619.80,162.80 619.96,163.31 620.12,163.81 620.28,164.32 620.44,164.83 620.60,165.34 620.76,165.85 620.92,166.36 621.08,166.78 621.24,167.10 621.40,167.43 621.56,167.75 621.72,168.07 621.88,168.40 622.04,168.72 622.20,169.04 622.36,169.37 622.52,169.69 622.68,170.02 622.84,170.34 623.00,170.66 623.16,170.99 623.32,171.30 623.48,171.52 623.64,171.73 623.80,171.95 623.96,172.17 624.12,172.39 624.28,172.61 624.44,172.83 624.60,173.04 624.76,173.26 624.92,173.48 625.08,173.70 625.24,173.92 625.40,174.13 625.56,174.35 625.72,174.57 625.88,174.79 626.04,175.01 626.20,175.23 626.36,175.44 626.52,175.66 626.68,175.88 626.84,176.10 627.00,176.32 627.16,176.43 627.32,176.55 627.48,176.67 627.64,176.79 627.80,176.90 627.96,177.02 628.12,177.14 628.28,177.26 628.44,177.38 628.60,177.49 628.76,177.61 628.92,177.73 629.08,177.85 629.24,177.96 629.40,178.08 629.56,178.20 629.72,178.32 629.88,178.43 630.04,178.55 630.20,178.67 630.36,178.79 630.52,178.91 630.68,179.02 630.84,179.14 631.00,179.26 631.16,179.38 631.32,179.49 631.48,179.61 631.64,179.73 631.80,179.85 631.96,179.97 632.12,180.08 632.28,180.20 632.44,180.32 632.60,180.44 632.76,180.55 632.92,180.67 633.08,180.75 633.24,180.89 633.40,181.03 633.56,181.17 633.72,181.31 633.88,181.45 634.04,181.58 634.20,181.65 634.36,181.73 634.52,181.80 634.68,181.88 634.84,181.95 635.00,182.03 635.16,182.10 635.32,182.18 635.48,182.25 635.64,182.33 635.80,182.40 635.96,182.47 636.12,182.55 636.28,182.62 636.44,182.70 636.60,182.77 636.76,182.85 636.92,182.92 637.08,183.00 637.24,183.07 637.40,183.15 637.56,183.22 637.72,183.30 637.88,183.37 638.04,183.45 638.20,183.52 638.36,183.59 638.52,183.67 638.68,183.74 638.84,183.82 639.00,183.89 639.16,183.97 639.32,184.04 639.48,184.12 639.64,184.19 639.80,184.27 639.96,184.34 640.12,184.40 640.28,184.45 640.44,184.50 640.60,184.55 640.76,184.60 640.92,184.65 641.08,184.70 641.24,184.75 641.40,184.80 641.56,184.85 641.72,184.90 641.88,184.95 642.04,185.00 642.20,185.05 642.36,185.10 642.52,185.15 642.68,185.20 642.84,185.25 643.00,185.30 643.16,185.36 643.32,185.41 643.48,185.46 643.64,185.51 643.80,185.56 643.96,185.61 644.12,185.66 644.28,185.71 644.44,185.76 644.60,185.81 644.76,185.86 644.92,185.91 645.08,185.96 645.24,186.01 645.40,186.06 645.56,186.11 645.72,186.16 645.88,186.21 646.04,186.26 646.20,186.31 646.36,186.36 646.52,186.41 646.68,186.46 646.84,186.51 647.00,186.56 647.16,186.62 647.32,186.67 647.48,186.72 647.64,186.77 647.80,186.82 647.96,186.87 648.12,186.92 648.28,186.97 648.44,187.02 648.60,187.07 648.76,187.12 648.92,187.17 649.08,187.22 649.24,187.27 649.40,187.32 649.56,187.37 649.72,187.42 649.88,187.47 650.04,187.52 650.20,187.57 650.36,187.62 650.52,187.67 650.68,187.72 650.84,187.77 651.00,187.82 651.16,187.87 651.32,187.93 651.48,187.98 651.64,188.03 651.80,188.08 651.96,188.13 652.12,188.18 652.28,188.23 652.44,188.28 652.60,188.33 652.76,188.37 652.92,188.40 653.08,188.42 653.24,188.45 653.40,188.48 653.56,188.51 653.72,188.53 653.88,188.56 654.04,188.59 654.20,188.62 654.36,188.64 654.52,188.67 654.68,188.70 654.84,188.73 655.00,188.75 655.16,188.78 655.32,188.81 655.48,188.83 655.64,188.86 655.80,188.89 655.96,188.92 656.12,188.94 656.28,188.97 656.44,189.00 656.60,189.03 656.76,189.05 656.92,189.08 657.08,189.11 657.24,189.14 657.40,189.16 657.56,189.19 657.72,189.22 657.88,189.24 658.04,189.27 658.20,189.30 658.36,189.33 658.52,189.35 658.68,189.38 658.84,189.41 659.00,189.44 659.16,189.46 659.32,189.49 659.48,189.52 659.64,189.54 659.80,189.57 659.96,189.60 660.12,189.63 660.28,189.65 660.44,189.68 660.60,189.71 660.76,189.74 660.92,189.76 661.08,189.79 661.24,189.82 661.40,189.85 661.56,189.87 661.72,189.90 661.88,189.93 662.04,189.95 662.20,189.98 662.36,190.01 662.52,190.04 662.68,190.06 662.84,190.09 663.00,190.12 663.16,190.15 663.32,190.17 663.48,190.20 663.64,190.23 663.80,190.26 663.96,190.28 664.12,190.31 664.28,190.34 664.44,190.36 664.60,190.39 664.76,190.42 664.92,190.45 665.08,190.47 665.24,190.49 665.40,190.51 665.56,190.53 665.72,190.55 665.88,190.57 666.04,190.58 666.20,190.60 666.36,190.62 666.52,190.64 666.68,190.66 666.84,190.68 667.00,190.70 667.16,190.72 667.32,190.74 667.48,190.76 667.64,190.78 667.80,190.80 667.96,190.82 668.12,190.83 668.28,190.85 668.44,190.87 668.60,190.89 668.76,190.91 668.92,190.93 669.08,190.95 669.24,190.97 669.40,190.99 669.56,191.01 669.72,191.03 669.88,191.05 670.04,191.06 670.20,191.08 670.36,191.10 670.52,191.12 670.68,191.14 670.84,191.16 671.00,191.18 671.16,191.20 671.32,191.22 671.48,191.24 671.64,191.26 671.80,191.28 671.96,191.30 672.12,191.31 672.28,191.33 672.44,191.35 672.60,191.37 672.76,191.38 672.92,191.39 673.08,191.40 673.24,191.41 673.40,191.42 673.56,191.44 673.72,191.45 673.88,191.46 674.04,191.47 674.20,191.48 674.36,191.49 674.52,191.51 674.68,191.52 674.84,191.53 675.00,191.54 675.16,191.55 675.32,191.56 675.48,191.57 675.64,191.59 675.80,191.60 675.96,191.61 676.12,191.62 676.28,191.63 676.44,191.64 676.60,191.66 676.76,191.67 676.92,191.68 677.08,191.69 677.24,191.70 677.40,191.71 677.56,191.72 677.72,191.74 677.88,191.75 678.04,191.76 678.20,191.77 678.36,191.78 678.52,191.79 678.68,191.80 678.84,191.82 679.00,191.83 679.16,191.84 679.32,191.85 679.48,191.86 679.64,191.87 679.80,191.89 679.96,191.90 680.12,191.91 680.28,191.92 680.44,191.93 680.60,191.94 680.76,191.95 680.92,191.97 681.08,191.98 681.24,191.99 681.40,192.00 681.56,192.01 681.72,192.02 681.88,192.04 682.04,192.05 682.20,192.06 682.36,192.07 682.52,192.08 682.68,192.09 682.84,192.10 683.00,192.12 683.16,192.13 683.32,192.14 683.48,192.15 683.64,192.16 683.80,192.17 683.96,192.19 684.12,192.20 684.28,192.21 684.44,192.22 684.60,192.23 684.76,192.24 684.92,192.25 685.08,192.26 685.24,192.27 685.40,192.28 685.56,192.29 685.72,192.30 685.88,192.31 686.04,192.32 686.20,192.32 686.36,192.33 686.52,192.34 686.68,192.35 686.84,192.36 687.00,192.37 687.16,192.38 687.32,192.38 687.48,192.39 687.64,192.40 687.80,192.41 687.96,192.42 688.12,192.43 688.28,192.43 688.44,192.44 688.60,192.45 688.76,192.46 688.92,192.47 689.08,192.48 689.24,192.49 689.40,192.49 689.56,192.50 689.72,192.51 689.88,192.52 690.04,192.53 690.20,192.54 690.36,192.55 690.52,192.55 690.68,192.56 690.84,192.57 691.00,192.58 691.16,192.59 691.32,192.60 691.48,192.61 691.64,192.61 691.80,192.62 691.96,192.63 692.12,192.64 692.28,192.65 692.44,192.66 692.60,192.67 692.76,192.67 692.92,192.68 693.08,192.69 693.24,192.70 693.40,192.71 693.56,192.72 693.72,192.73 693.88,192.73 694.04,192.74 694.20,192.75 694.36,192.76 694.52,192.77 694.68,192.78 694.84,192.78 695.00,192.79 695.16,192.80 695.32,192.81 695.48,192.82 695.64,192.83 695.80,192.84 695.96,192.84 696.12,192.85 696.28,192.86 696.44,192.87 696.60,192.88 696.76,192.89 696.92,192.90 697.08,192.90 697.24,192.91 697.40,192.92 697.56,192.93 697.72,192.94 697.88,192.95 698.04,192.96 698.20,192.96 698.36,192.97 698.52,192.98 698.68,192.99 698.84,193.00 699.00,193.01 699.16,193.02 699.32,193.02 699.48,193.03 699.64,193.04 699.80,193.05 699.96,193.06 700.12,193.06 700.28,193.07 700.44,193.07 700.60,193.08 700.76,193.08 700.92,193.08 701.08,193.09 701.24,193.09 701.40,193.10 701.56,193.10 701.72,193.11 701.88,193.11 702.04,193.11 702.20,193.12 702.36,193.12 702.52,193.13 702.68,193.13 702.84,193.14 703.00,193.14 703.16,193.14 703.32,193.15 703.48,193.15 703.64,193.16 703.80,193.16 703.96,193.17 704.12,193.17 704.28,193.17 704.44,193.18 704.60,193.18 704.76,193.19 704.92,193.19 705.08,193.20 705.24,193.20 705.40,193.20 705.56,193.21 705.72,193.21 705.88,193.22 706.04,193.22 706.20,193.23 706.36,193.23 706.52,193.23 706.68,193.24 706.84,193.24 707.00,193.25 707.16,193.25 707.32,193.26 707.48,193.26 707.64,193.26 707.80,193.27 707.96,193.27 708.12,193.28 708.28,193.28 708.44,193.29 708.60,193.29 708.76,193.29 708.92,193.30 709.08,193.30 709.24,193.31 709.40,193.31 709.56,193.31 709.72,193.32 709.88,193.32 710.04,193.33 710.20,193.33 710.36,193.34 710.52,193.34 710.68,193.34 710.84,193.35 711.00,193.35 711.16,193.36 711.32,193.36 711.48,193.37 711.64,193.37 711.80,193.37 711.96,193.38 712.12,193.38 712.28,193.39 712.44,193.39 712.60,193.40 712.76,193.40 712.92,193.40 713.08,193.41 713.24,193.41 713.40,193.42 713.56,193.42 713.72,193.43 713.88,193.43 714.04,193.43 714.20,193.44 714.36,193.44 714.52,193.45 714.68,193.45 714.84,193.46 715.00,193.46 715.16,193.46 715.32,193.47 715.48,193.47 715.64,193.48 715.80,193.48 715.96,193.49 716.12,193.49 716.28,193.49 716.44,193.50 716.60,193.50 716.76,193.51 716.92,193.51 717.08,193.52 717.24,193.52 717.40,193.52 717.56,193.53 717.72,193.53 717.88,193.54 718.04,193.54 718.20,193.55 718.36,193.55 718.52,193.55 718.68,193.56 718.84,193.56 719.00,193.57 719.16,193.57 719.32,193.58 719.48,193.58 719.64,193.58 719.80,193.59 719.96,193.59 720.12,193.60 720.28,193.60 720.44,193.61 720.60,193.61 720.76,193.61 720.92,193.62 721.08,193.62 721.24,193.63 721.40,193.63 721.56,193.63 721.72,193.64 721.88,193.64 722.04,193.65 722.20,193.65 722.36,193.66 722.52,193.66 722.68,193.66 722.84,193.67 723.00,193.67 723.16,193.68 723.32,193.68 723.48,193.69 723.64,193.69 723.80,193.69 723.96,193.70 724.12,193.70 724.28,193.71 724.44,193.71 724.60,193.72 724.76,193.72 724.92,193.72 725.08,193.73 725.24,193.73 725.40,193.74 725.56,193.74 725.72,193.75 725.88,193.75 726.04,193.75 726.20,193.76 726.36,193.76 726.52,193.77 726.68,193.77 726.84,193.78 727.00,193.78 727.16,193.78 727.32,193.79 727.48,193.79 727.64,193.80 727.80,193.80 727.96,193.81 728.12,193.81 728.28,193.81 728.44,193.82 728.60,193.82 728.76,193.83 728.92,193.83 729.08,193.84 729.24,193.84 729.40,193.84 729.56,193.85 729.72,193.85 729.88,193.86 730.04,193.86 730.20,193.86 730.20,198.34 730.04,198.34 729.88,198.34 729.72,198.33 729.56,198.33 729.40,198.32 729.24,198.32 729.08,198.32 728.92,198.31 728.76,198.31 728.60,198.30 728.44,198.30 728.28,198.29 728.12,198.29 727.96,198.29 727.80,198.28 727.64,198.28 727.48,198.27 727.32,198.27 727.16,198.26 727.00,198.26 726.84,198.26 726.68,198.25 726.52,198.25 726.36,198.24 726.20,198.24 726.04,198.23 725.88,198.23 725.72,198.23 725.56,198.22 725.40,198.22 725.24,198.21 725.08,198.21 724.92,198.20 724.76,198.20 724.60,198.20 724.44,198.19 724.28,198.19 724.12,198.18 723.96,198.18 723.80,198.17 723.64,198.17 723.48,198.17 723.32,198.16 723.16,198.16 723.00,198.15 722.84,198.15 722.68,198.14 722.52,198.14 722.36,198.14 722.20,198.13 722.04,198.13 721.88,198.12 721.72,198.12 721.56,198.11 721.40,198.11 721.24,198.11 721.08,198.10 720.92,198.10 720.76,198.09 720.60,198.09 720.44,198.09 720.28,198.08 720.12,198.08 719.96,198.07 719.80,198.07 719.64,198.06 719.48,198.06 719.32,198.06 719.16,198.05 719.00,198.05 718.84,198.04 718.68,198.04 718.52,198.03 718.36,198.03 718.20,198.03 718.04,198.02 717.88,198.02 717.72,198.01 717.56,198.01 717.40,198.00 717.24,198.00 717.08,198.00 716.92,197.99 716.76,197.99 716.60,197.98 716.44,197.98 716.28,197.97 716.12,197.97 715.96,197.97 715.80,197.96 715.64,197.96 715.48,197.95 715.32,197.95 715.16,197.94 715.00,197.94 714.84,197.94 714.68,197.93 714.52,197.93 714.36,197.92 714.20,197.92 714.04,197.91 713.88,197.91 713.72,197.91 713.56,197.90 713.40,197.90 713.24,197.89 713.08,197.89 712.92,197.88 712.76,197.88 712.60,197.88 712.44,197.87 712.28,197.87 712.12,197.86 711.96,197.86 711.80,197.85 711.64,197.85 711.48,197.85 711.32,197.84 711.16,197.84 711.00,197.83 710.84,197.83 710.68,197.82 710.52,197.82 710.36,197.82 710.20,197.81 710.04,197.81 709.88,197.80 709.72,197.80 709.56,197.79 709.40,197.79 709.24,197.79 709.08,197.78 708.92,197.78 708.76,197.77 708.60,197.77 708.44,197.77 708.28,197.76 708.12,197.76 707.96,197.75 707.80,197.75 707.64,197.74 707.48,197.74 707.32,197.74 707.16,197.73 707.00,197.73 706.84,197.72 706.68,197.72 706.52,197.71 706.36,197.71 706.20,197.71 706.04,197.70 705.88,197.70 705.72,197.69 705.56,197.69 705.40,197.68 705.24,197.68 705.08,197.68 704.92,197.67 704.76,197.67 704.60,197.66 704.44,197.66 704.28,197.65 704.12,197.65 703.96,197.65 703.80,197.64 703.64,197.64 703.48,197.63 703.32,197.63 703.16,197.62 703.00,197.62 702.84,197.62 702.68,197.61 702.52,197.61 702.36,197.60 702.20,197.60 702.04,197.59 701.88,197.59 701.72,197.59 701.56,197.58 701.40,197.58 701.24,197.57 701.08,197.57 700.92,197.56 700.76,197.56 700.60,197.56 700.44,197.55 700.28,197.55 700.12,197.54 699.96,197.54 699.80,197.53 699.64,197.52 699.48,197.51 699.32,197.50 699.16,197.50 699.00,197.49 698.84,197.48 698.68,197.47 698.52,197.46 698.36,197.45 698.20,197.44 698.04,197.44 697.88,197.43 697.72,197.42 697.56,197.41 697.40,197.40 697.24,197.39 697.08,197.38 696.92,197.38 696.76,197.37 696.60,197.36 696.44,197.35 696.28,197.34 696.12,197.33 695.96,197.32 695.80,197.32 695.64,197.31 695.48,197.30 695.32,197.29 695.16,197.28 695.00,197.27 694.84,197.26 694.68,197.26 694.52,197.25 694.36,197.24 694.20,197.23 694.04,197.22 693.88,197.21 693.72,197.21 693.56,197.20 693.40,197.19 693.24,197.18 693.08,197.17 692.92,197.16 692.76,197.15 692.60,197.15 692.44,197.14 692.28,197.13 692.12,197.12 691.96,197.11 691.80,197.10 691.64,197.09 691.48,197.09 691.32,197.08 691.16,197.07 691.00,197.06 690.84,197.05 690.68,197.04 690.52,197.03 690.36,197.03 690.20,197.02 690.04,197.01 689.88,197.00 689.72,196.99 689.56,196.98 689.40,196.97 689.24,196.97 689.08,196.96 688.92,196.95 688.76,196.94 688.60,196.93 688.44,196.92 688.28,196.91 688.12,196.91 687.96,196.90 687.80,196.89 687.64,196.88 687.48,196.87 687.32,196.86 687.16,196.86 687.00,196.85 686.84,196.84 686.68,196.83 686.52,196.82 686.36,196.81 686.20,196.80 686.04,196.80 685.88,196.79 685.72,196.78 685.56,196.77 685.40,196.76 685.24,196.75 685.08,196.74 684.92,196.73 684.76,196.72 684.60,196.71 684.44,196.70 684.28,196.69 684.12,196.68 683.96,196.67 683.80,196.65 683.64,196.64 683.48,196.63 683.32,196.62 683.16,196.61 683.00,196.60 682.84,196.58 682.68,196.57 682.52,196.56 682.36,196.55 682.20,196.54 682.04,196.53 681.88,196.52 681.72,196.50 681.56,196.49 681.40,196.48 681.24,196.47 681.08,196.46 680.92,196.45 680.76,196.43 680.60,196.42 680.44,196.41 680.28,196.40 680.12,196.39 679.96,196.38 679.80,196.37 679.64,196.35 679.48,196.34 679.32,196.33 679.16,196.32 679.00,196.31 678.84,196.30 678.68,196.28 678.52,196.27 678.36,196.26 678.20,196.25 678.04,196.24 677.88,196.23 677.72,196.22 677.56,196.20 677.40,196.19 677.24,196.18 677.08,196.17 676.92,196.16 676.76,196.15 676.60,196.14 676.44,196.12 676.28,196.11 676.12,196.10 675.96,196.09 675.80,196.08 675.64,196.07 675.48,196.05 675.32,196.04 675.16,196.03 675.00,196.02 674.84,196.01 674.68,196.00 674.52,195.99 674.36,195.97 674.20,195.96 674.04,195.95 673.88,195.94 673.72,195.93 673.56,195.92 673.40,195.90 673.24,195.89 673.08,195.88 672.92,195.87 672.76,195.86 672.60,195.85 672.44,195.83 672.28,195.81 672.12,195.79 671.96,195.78 671.80,195.76 671.64,195.74 671.48,195.72 671.32,195.70 671.16,195.68 671.00,195.66 670.84,195.64 670.68,195.62 670.52,195.60 670.36,195.58 670.20,195.56 670.04,195.54 669.88,195.53 669.72,195.51 669.56,195.49 669.40,195.47 669.24,195.45 669.08,195.43 668.92,195.41 668.76,195.39 668.60,195.37 668.44,195.35 668.28,195.33 668.12,195.31 667.96,195.30 667.80,195.28 667.64,195.26 667.48,195.24 667.32,195.22 667.16,195.20 667.00,195.18 666.84,195.16 666.68,195.14 666.52,195.12 666.36,195.10 666.20,195.08 666.04,195.06 665.88,195.05 665.72,195.03 665.56,195.01 665.40,194.99 665.24,194.97 665.08,194.95 664.92,194.93 664.76,194.90 664.60,194.87 664.44,194.84 664.28,194.82 664.12,194.79 663.96,194.76 663.80,194.74 663.64,194.71 663.48,194.68 663.32,194.65 663.16,194.63 663.00,194.60 662.84,194.57 662.68,194.54 662.52,194.52 662.36,194.49 662.20,194.46 662.04,194.43 661.88,194.41 661.72,194.38 661.56,194.35 661.40,194.33 661.24,194.30 661.08,194.27 660.92,194.24 660.76,194.22 660.60,194.19 660.44,194.16 660.28,194.13 660.12,194.11 659.96,194.08 659.80,194.05 659.64,194.02 659.48,194.00 659.32,193.97 659.16,193.94 659.00,193.92 658.84,193.89 658.68,193.86 658.52,193.83 658.36,193.81 658.20,193.78 658.04,193.75 657.88,193.72 657.72,193.70 657.56,193.67 657.40,193.64 657.24,193.62 657.08,193.59 656.92,193.56 656.76,193.53 656.60,193.51 656.44,193.48 656.28,193.45 656.12,193.42 655.96,193.40 655.80,193.37 655.64,193.34 655.48,193.31 655.32,193.29 655.16,193.26 655.00,193.23 654.84,193.21 654.68,193.18 654.52,193.15 654.36,193.12 654.20,193.10 654.04,193.07 653.88,193.04 653.72,193.01 653.56,192.99 653.40,192.96 653.24,192.93 653.08,192.90 652.92,192.88 652.76,192.85 652.60,192.81 652.44,192.76 652.28,192.71 652.12,192.66 651.96,192.61 651.80,192.56 651.64,192.51 651.48,192.46 651.32,192.41 651.16,192.35 651.00,192.30 650.84,192.25 650.68,192.20 650.52,192.15 650.36,192.10 650.20,192.05 650.04,192.00 649.88,191.95 649.72,191.90 649.56,191.85 649.40,191.80 649.24,191.75 649.08,191.70 648.92,191.65 648.76,191.60 648.60,191.55 648.44,191.50 648.28,191.45 648.12,191.40 647.96,191.35 647.80,191.30 647.64,191.25 647.48,191.20 647.32,191.15 647.16,191.10 647.00,191.04 646.84,190.99 646.68,190.94 646.52,190.89 646.36,190.84 646.20,190.79 646.04,190.74 645.88,190.69 645.72,190.64 645.56,190.59 645.40,190.54 645.24,190.49 645.08,190.44 644.92,190.39 644.76,190.34 644.60,190.29 644.44,190.24 644.28,190.19 644.12,190.14 643.96,190.09 643.80,190.04 643.64,189.99 643.48,189.94 643.32,189.89 643.16,189.84 643.00,189.78 642.84,189.73 642.68,189.68 642.52,189.63 642.36,189.58 642.20,189.53 642.04,189.48 641.88,189.43 641.72,189.38 641.56,189.33 641.40,189.28 641.24,189.23 641.08,189.18 640.92,189.13 640.76,189.08 640.60,189.03 640.44,188.98 640.28,188.93 640.12,188.88 639.96,188.82 639.80,188.75 639.64,188.67 639.48,188.60 639.32,188.52 639.16,188.45 639.00,188.37 638.84,188.30 638.68,188.22 638.52,188.15 638.36,188.07 638.20,188.00 638.04,187.93 637.88,187.85 637.72,187.78 637.56,187.70 637.40,187.63 637.24,187.55 637.08,187.48 636.92,187.40 636.76,187.33 636.60,187.25 636.44,187.18 636.28,187.10 636.12,187.03 635.96,186.95 635.80,186.88 635.64,186.81 635.48,186.73 635.32,186.66 635.16,186.58 635.00,186.51 634.84,186.43 634.68,186.36 634.52,186.28 634.36,186.21 634.20,186.13 634.04,186.06 633.88,185.93 633.72,185.79 633.56,185.65 633.40,185.51 633.24,185.37 633.08,185.23 632.92,185.02 632.76,184.85 632.60,184.68 632.44,184.52 632.28,184.35 632.12,184.19 631.96,184.02 631.80,183.86 631.64,183.69 631.48,183.52 631.32,183.36 631.16,183.19 631.00,183.03 630.84,182.86 630.68,182.70 630.52,182.53 630.36,182.36 630.20,182.20 630.04,182.03 629.88,181.87 629.72,181.70 629.56,181.54 629.40,181.37 629.24,181.20 629.08,181.04 628.92,180.87 628.76,180.71 628.60,180.54 628.44,180.38 628.28,180.21 628.12,180.04 627.96,179.88 627.80,179.71 627.64,179.55 627.48,179.38 627.32,179.22 627.16,179.05 627.00,178.88 626.84,178.62 626.68,178.35 626.52,178.09 626.36,177.82 626.20,177.55 626.04,177.29 625.88,177.02 625.72,176.75 625.56,176.49 625.40,176.22 625.24,175.96 625.08,175.69 624.92,175.42 624.76,175.16 624.60,174.89 624.44,174.63 624.28,174.36 624.12,174.09 623.96,173.83 623.80,173.56 623.64,173.29 623.48,173.03 623.32,172.76 623.16,172.40 623.00,172.03 622.84,171.66 622.68,171.29 622.52,170.92 622.36,170.54 622.20,170.17 622.04,169.80 621.88,169.43 621.72,169.06 621.56,168.69 621.40,168.31 621.24,167.94 621.08,167.57 620.92,167.11 620.76,166.55 620.60,165.99 620.44,165.43 620.28,164.88 620.12,164.32 619.96,163.76 619.80,163.20 619.64,162.65 619.48,162.06 619.32,161.29 619.16,160.52 619.00,159.75 618.84,159.00 618.68,158.26 618.52,157.51 618.36,156.76 618.20,156.02 618.04,155.27 617.88,154.24 617.72,153.12 617.56,152.00 617.40,150.88 617.24,149.76 617.08,148.64 616.92,147.20 616.76,145.44 616.60,143.68 616.44,141.92 616.28,140.16 616.12,138.40 615.96,136.12 615.80,132.28 615.64,128.44 615.48,124.40 615.32,118.96 615.16,113.52 615.00,108.08" fill="#f7f320"/>
  <g fill="none" stroke="#fdf91a" stroke-width="1.05" stroke-linejoin="round">
  <polyline points="207.60,193.49 207.76,195.59 207.92,195.04 208.08,192.77 208.24,192.91 208.40,193.22 208.56,194.70 208.72,193.83 208.88,196.71 209.04,196.58 209.20,197.97 209.36,197.59 209.52,194.02 209.68,194.35 209.84,193.67 210.00,195.99 210.16,195.27 210.32,192.61 210.48,195.55 210.64,193.19 210.80,193.87 210.96,196.02 211.12,193.27 211.28,195.25 211.44,196.46 211.60,197.42 211.76,194.85 211.92,193.99 212.08,193.72 212.24,197.10 212.40,197.30 212.56,196.53 212.72,195.79 212.88,196.49 213.04,194.21 213.20,192.41 213.36,195.21 213.52,195.75 213.68,193.29 213.84,192.22 214.00,192.79 214.16,192.71 214.32,193.15 214.48,194.29 214.64,193.43 214.80,195.98 214.96,197.10 215.12,194.17 215.28,194.35 215.44,197.13 215.60,193.28 215.76,193.19 215.92,195.12 216.08,192.07 216.24,193.06 216.40,195.91 216.56,194.20 216.72,195.16 216.88,196.04 217.04,196.19 217.20,193.83 217.36,193.07 217.52,193.15 217.68,193.71 217.84,194.22 218.00,193.16 218.16,193.31 218.32,192.93 218.48,195.56 218.64,193.09 218.80,193.25 218.96,195.63 219.12,193.40 219.28,191.91 219.44,192.72 219.60,195.40 219.76,192.01 219.92,194.55 220.08,195.09 220.24,195.00 220.40,196.49 220.56,193.69 220.72,193.47 220.88,195.39 221.04,193.86 221.20,196.21 221.36,196.10 221.52,195.75 221.68,192.65 221.84,192.45 222.00,191.76 222.16,192.30 222.32,195.38 222.48,195.41 222.64,195.59 222.80,192.61 222.96,192.76 223.12,195.22 223.28,196.09 223.44,195.64 223.60,193.08 223.76,196.43 223.92,195.90 224.08,193.07 224.24,193.33 224.40,195.86 224.56,193.13 224.72,194.77 224.88,191.92 225.04,195.00 225.20,191.88 225.36,195.22 225.52,192.68 225.68,191.55 225.84,195.69 226.00,194.46 226.16,193.79 226.32,195.84 226.48,193.35 226.64,193.31 226.80,193.28 226.96,192.81 227.12,193.24 227.28,194.47 227.44,193.06 227.60,193.50 227.76,193.70 227.92,192.72 228.08,191.46 228.24,191.90 228.40,194.42 228.56,192.61 228.72,194.17 228.88,192.43 229.04,192.95 229.20,195.37 229.36,194.75 229.52,195.76 229.68,194.87 229.84,194.24 230.00,193.47 230.16,193.42 230.32,194.41 230.48,194.80 230.64,193.58 230.80,194.33 230.96,191.63 231.12,191.57 231.28,191.68 231.44,194.45 231.60,192.19 231.76,194.47 231.92,195.18 232.08,192.82 232.24,193.40 232.40,195.57 232.56,192.71 232.72,194.03 232.88,192.51 233.04,194.86 233.20,193.68 233.36,191.58 233.52,193.61 233.68,191.44 233.84,193.92 234.00,191.54 234.16,191.51 234.32,192.14 234.48,192.76 234.64,194.56 234.80,192.37 234.96,194.15 235.12,192.44 235.28,194.58 235.44,192.37 235.60,194.27 235.76,192.14 235.92,191.94 236.08,192.74 236.24,193.28 236.40,191.86 236.56,192.93 236.72,191.42 236.88,191.34 237.04,191.96 237.20,193.82 237.36,193.03 237.52,192.18 237.68,191.99 237.84,194.31 238.00,192.47 238.16,194.78 238.32,194.51 238.48,193.29 238.64,192.69 238.80,193.81 238.96,192.22 239.12,193.51 239.28,192.10 239.44,191.27 239.60,191.26 239.76,191.63 239.92,191.38 240.08,193.75 240.24,192.01 240.40,192.18 240.56,192.05 240.72,192.36 240.88,194.48 241.04,192.42 241.20,192.52 241.36,191.88 241.52,192.79 241.68,191.93 241.84,191.44 242.00,191.41 242.16,190.68 242.32,191.58 242.48,192.66 242.64,193.04 242.80,193.02 242.96,191.89 243.12,193.67 243.28,193.35 243.44,191.61 243.60,193.85 243.76,193.63 243.92,191.94 244.08,192.93 244.24,193.63 244.40,193.05 244.56,193.13 244.72,191.21 244.88,191.26 245.04,191.09 245.20,192.29 245.36,192.42 245.52,191.76 245.68,192.77 245.84,192.09 246.00,192.70 246.16,192.95 246.32,191.38 246.48,193.12 246.64,193.19 246.80,192.44 246.96,192.33 247.12,193.13 247.28,192.79 247.44,191.32 247.60,192.69 247.76,192.33 247.92,190.81 248.08,192.21 248.24,192.16 248.40,191.74 248.56,191.45 248.72,192.57 248.88,191.07 249.04,192.86 249.20,192.90 249.36,191.12 249.52,191.91 249.68,192.87 249.84,193.03 250.00,191.80 250.16,191.35 250.32,191.15 250.48,192.56 250.64,190.89 250.80,191.76 250.96,190.61 251.12,191.46 251.28,192.15 251.44,190.58 251.60,192.06 251.76,191.53 251.92,192.30 252.08,192.14 252.24,191.10 252.40,192.50 252.56,191.66 252.72,190.90 252.88,190.83 253.04,191.51 253.20,191.27 253.36,190.88 253.52,190.57 253.68,190.73 253.84,190.61 254.00,191.65 254.16,190.19 254.32,191.53 254.48,191.68 254.64,190.45 254.80,191.90 254.96,191.73 255.12,192.00 255.28,190.91 255.44,191.04 255.60,191.06 255.76,192.05 255.92,191.49 256.08,190.79 256.24,190.80 256.40,190.47 256.56,190.15 256.72,190.13 256.88,191.26 257.04,190.26 257.20,191.33 257.36,190.27 257.52,190.34 257.68,190.91 257.84,190.40 258.00,190.66 258.16,191.61 258.32,191.55 258.48,191.47 258.64,191.22 258.80,191.44 258.96,191.37 259.12,190.84 259.28,190.97 259.44,189.93 259.60,190.83 259.76,190.25 259.92,190.77 260.08,190.66 260.24,190.05 260.40,189.90 260.56,191.01 260.72,190.07 260.88,190.48 261.04,190.33 261.20,190.30 261.36,190.94 261.52,191.07 261.68,190.17 261.84,190.68 262.00,190.06 262.16,190.41 262.32,190.00 262.48,189.76 262.64,189.71 262.80,189.73 262.96,190.48 263.12,190.06 263.28,189.79 263.44,190.54 263.60,190.62 263.76,190.10 263.92,189.87 264.08,189.91 264.24,189.84 264.40,189.97 264.56,189.78 264.72,189.81 264.88,189.75 265.04,190.04 265.20,190.17 265.36,190.02 265.52,189.60 265.68,189.57 265.84,189.72 266.00,189.51 266.16,189.49 266.32,189.36 266.48,189.47 266.64,189.97 266.80,189.40 266.96,189.66 267.12,189.74 267.28,189.80 267.44,189.31 267.60,189.28 267.76,189.21 267.92,189.22 268.08,189.19 268.24,189.44 268.40,189.35 268.56,189.32 268.72,188.87 268.88,188.86 269.04,189.19 269.20,189.23 269.36,189.01 269.52,189.10 269.68,188.83 269.84,188.92 270.00,189.12 270.16,189.05 270.32,189.00 270.48,188.97 270.64,188.67 270.80,188.60 270.96,188.56 271.12,188.65 271.28,188.65 271.44,188.66 271.60,188.59 271.76,188.55 271.92,188.55 272.08,188.42 272.24,188.46 272.40,188.29 272.56,188.47 272.72,188.28 272.88,188.44 273.04,188.35 273.20,188.18 273.36,188.11 273.52,188.08 273.68,188.17 273.84,188.13 274.00,187.91 274.16,187.87 274.32,187.96 274.48,187.95 274.64,187.83 274.80,187.77 274.96,187.88 275.12,187.70 275.28,187.73 275.44,187.75 275.60,187.86 275.76,187.77 275.92,187.78 276.08,187.62 276.24,187.52 276.40,187.47 276.56,187.62 276.72,187.52 276.88,187.34 277.04,187.25 277.20,187.32 277.36,187.36 277.52,187.23 277.68,187.17 277.84,187.28 278.00,187.31 278.16,187.10 278.32,187.05 278.48,187.07 278.64,187.07 278.80,187.14 278.96,186.94 279.12,187.08 279.28,187.02 279.44,186.90 279.60,186.76 279.76,186.91 279.92,186.69 280.08,186.81 280.24,186.60 280.40,186.57 280.56,186.71 280.72,186.54 280.88,186.70 281.04,186.56 281.20,186.46 281.36,186.43 281.52,186.42 281.68,186.47 281.84,186.46 282.00,186.19 282.16,186.17 282.32,186.06 282.48,186.19 282.64,185.91 282.80,185.83 282.96,185.77 283.12,185.78 283.28,185.88 283.44,185.83 283.60,185.76 283.76,185.76 283.92,185.71 284.08,185.50 284.24,185.42 284.40,185.57 284.56,185.49 284.72,185.23 284.88,185.34 285.04,185.16 285.20,185.09 285.36,185.01 285.52,184.91 285.68,184.82 285.84,184.81 286.00,184.77 286.16,184.89 286.32,184.63 286.48,184.80 286.64,184.55 286.80,184.54 286.96,184.65 287.12,184.60 287.28,184.42 287.44,184.29 287.60,184.33 287.76,184.23 287.92,184.32 288.08,184.05 288.24,184.02 288.40,184.11 288.56,183.82 288.72,183.84 288.88,183.91 289.04,183.85 289.20,183.61 289.36,183.56 289.52,183.53 289.68,183.71 289.84,183.48 290.00,183.59 290.16,183.56 290.32,183.34 290.48,183.27 290.64,183.39 290.80,183.26 290.96,183.07 291.12,183.15 291.28,182.94 291.44,182.86 291.60,182.76 291.76,182.90 291.92,182.88 292.08,182.78 292.24,182.79 292.40,182.52 292.56,182.51 292.72,182.53 292.88,182.61 293.04,182.53 293.20,182.28 293.36,182.16 293.52,182.11 293.68,182.04 293.84,182.06 294.00,181.76 294.16,181.85 294.32,181.74 294.48,181.66 294.64,181.57 294.80,181.45 294.96,181.26 295.12,181.19 295.28,181.13 295.44,181.20 295.60,180.93 295.76,180.88 295.92,180.97 296.08,180.73 296.24,180.61 296.40,180.51 296.56,180.56 296.72,180.37 296.88,180.45 297.04,180.34 297.20,180.26 297.36,179.97 297.52,179.85 297.68,179.77 297.84,179.80 298.00,179.80 298.16,179.62 298.32,179.50 298.48,179.47 298.64,179.49 298.80,179.43 298.96,179.36 299.12,179.29 299.28,179.16 299.44,178.90 299.60,179.00 299.76,178.74 299.92,178.75 300.08,178.56 300.24,178.60 300.40,178.35 300.56,178.27 300.72,178.19 300.88,178.10 301.04,178.23 301.20,178.10 301.36,177.91 301.52,177.82 301.68,177.87 301.84,177.64 302.00,177.42 302.16,177.46 302.32,177.30 302.48,177.22 302.64,176.86 302.80,176.81 302.96,176.78 303.12,176.66 303.28,176.54 303.44,176.20 303.60,176.13 303.76,175.98 303.92,175.88 304.08,175.98 304.24,175.80 304.40,175.76 304.56,175.48 304.72,175.51 304.88,175.26 305.04,175.08 305.20,175.11 305.36,175.00 305.52,174.65 305.68,174.66 305.84,174.53 306.00,174.26 306.16,174.17 306.32,174.00 306.48,173.89 306.64,173.79 306.80,173.80 306.96,173.71 307.12,173.45 307.28,173.31 307.44,173.25 307.60,173.26 307.76,172.98 307.92,172.87 308.08,172.70 308.24,172.73 308.40,172.53 308.56,172.24 308.72,172.10 308.88,172.02 309.04,171.96 309.20,171.85 309.36,171.56 309.52,171.45 309.68,171.49 309.84,171.26 310.00,171.11 310.16,170.99 310.32,171.05 310.48,170.74 310.64,170.71 310.80,170.48 310.96,170.29 311.12,170.23 311.28,170.04 311.44,169.66 311.60,169.42 311.76,169.39 311.92,169.03 312.08,168.80 312.24,168.84 312.40,168.51 312.56,168.47 312.72,168.15 312.88,168.12 313.04,167.81 313.20,167.56 313.36,167.32 313.52,167.19 313.68,166.93 313.84,166.69 314.00,166.18 314.16,166.05 314.32,165.65 314.48,165.42 314.64,165.02 314.80,164.76 314.96,164.57 315.12,164.39 315.28,163.90 315.44,163.64 315.60,163.37 315.76,163.03 315.92,162.46 316.08,162.08 316.24,161.91 316.40,161.54 316.56,161.02 316.72,160.53 316.88,160.36 317.04,159.81 317.20,159.57 317.36,159.12 317.52,158.42 317.68,157.38 317.84,156.71 318.00,155.70 318.16,154.90 318.32,154.21 318.48,153.37 318.64,152.36 318.80,151.53 318.96,150.73"/>
  <polyline points="321.20,110.85 321.30,108.14 321.63,113.63 321.96,105.53 322.29,108.53 322.62,108.18 322.95,107.33 323.28,108.00 323.61,109.02 323.94,107.89 324.27,104.40 324.60,105.99 324.93,109.19 325.26,107.08 325.59,104.67 325.92,106.67 326.25,107.71 326.58,107.72 326.91,109.12 327.24,105.95 327.57,107.89 327.90,109.72 328.23,110.10 328.56,109.53 328.89,110.67 329.22,109.32 329.55,109.16 329.88,109.08 330.21,111.00 330.54,117.04 330.87,108.97 331.20,106.90 331.53,102.56 331.86,106.17 332.19,110.36 332.52,108.02 332.85,109.53 333.18,107.65 333.51,109.24 333.84,108.82 334.17,104.33 334.50,107.18 334.83,109.73 335.16,110.49 335.49,108.65 335.82,110.18 336.15,107.18 336.48,110.64 336.81,109.44 337.14,110.04 337.47,110.27 337.80,110.91 338.13,105.71 338.46,107.32 338.79,110.01 339.12,106.94 339.45,109.91 339.78,110.62 340.11,107.25 340.44,107.15 340.77,110.39 341.10,103.65 341.43,111.36 341.76,105.65 342.09,106.67 342.42,107.78 342.75,109.31 343.08,109.38 343.41,105.39 343.74,105.45 344.07,108.50 344.40,109.64 344.73,105.42 345.06,110.41 345.39,103.70 345.72,106.85 346.05,105.52 346.38,105.87 346.71,107.38 347.04,110.69 347.37,111.09 347.70,107.54 348.03,105.94 348.36,109.32 348.69,107.89 349.02,104.10 349.35,108.03 349.68,112.06 350.01,108.70 350.34,109.91 350.67,107.60 351.00,110.46 351.33,111.49 351.66,107.73 351.99,113.73 352.32,110.04 352.65,107.64 352.98,105.62 353.31,105.74 353.64,106.34 353.97,108.16 354.30,107.30 354.63,108.67 354.96,106.59 355.29,109.64 355.62,107.90 355.95,109.17 356.28,108.89 356.61,109.21 356.94,106.71 357.27,107.10 357.60,108.31 357.93,109.64 358.26,107.90 358.59,111.19 358.92,105.08 359.25,110.60 359.58,106.77 359.91,104.75 360.24,110.06 360.57,101.31 360.90,105.94 361.23,108.72 361.56,107.30 361.89,106.08 362.22,109.24 362.55,111.80 362.88,110.58 363.21,107.00 363.54,109.49 363.87,111.36 364.20,108.17 364.53,107.62 364.86,108.74 365.19,105.28 365.52,106.94 365.85,108.43 366.18,108.74 366.51,106.87 366.84,106.72 367.17,108.91 367.50,103.66 367.83,110.29 368.16,106.68 368.49,109.39 368.82,108.08 369.15,109.85 369.48,105.76 369.81,103.83 370.14,104.76 370.47,104.96 370.80,104.46 371.13,106.48 371.46,107.39 371.79,109.99 372.12,106.03 372.45,105.95 372.78,106.11 373.11,107.05 373.44,110.72 373.77,105.08 374.10,106.85 374.43,105.30 374.76,106.33 375.09,108.27 375.42,108.92 375.75,103.22 376.08,108.98 376.41,104.26 376.74,107.51 377.07,108.69 377.40,107.89 377.73,109.88 378.06,107.37 378.39,103.61 378.72,108.92 379.05,109.89 379.38,108.35 379.71,111.33 380.04,111.56 380.37,102.40 380.70,111.69 381.03,107.55 381.36,106.93 381.69,106.49 382.02,107.79 382.35,107.20 382.68,105.81 383.01,108.84 383.34,114.31 383.67,105.84 384.00,101.16 384.33,105.45 384.66,111.08 384.99,106.51 385.32,108.80 385.65,109.40 385.98,109.34 386.31,107.77 386.64,107.16 386.97,105.62 387.30,107.48 387.63,103.07 387.96,101.20 388.29,107.14 388.62,106.73 388.95,106.44 389.28,104.33 389.61,106.07 389.94,104.31 390.27,107.63 390.60,108.75 390.93,103.98 391.26,106.83 391.59,110.05 391.92,110.15 392.25,105.55 392.58,104.91 392.91,105.72 393.24,107.44 393.57,108.27 393.90,109.22 394.23,111.45 394.56,104.50 394.89,110.13 395.22,105.13 395.55,109.28 395.88,106.52 396.21,109.16 396.54,106.84 396.87,107.02 397.20,103.48 397.53,108.13 397.86,106.71 398.19,105.46 398.52,104.43 398.85,104.03 399.18,106.60 399.51,107.44 399.84,104.58 400.17,108.58 400.50,108.16 400.83,106.41 401.16,106.63 401.49,107.67 401.82,113.00 402.15,105.05 402.48,107.33 402.81,114.08 403.14,107.77 403.47,109.38 403.80,106.16 404.13,108.89 404.46,106.38 404.79,106.74 405.12,106.25 405.45,105.06 405.78,115.97 406.11,108.43 406.44,106.41 406.77,108.42 407.10,108.62 407.43,107.54 407.76,107.19 408.09,107.62 408.42,105.35 408.75,106.04 409.08,108.65 409.41,107.55 409.74,106.47 410.07,110.53 410.40,102.51 410.73,108.31 411.06,106.59 411.39,106.51 411.72,109.27 412.05,105.80 412.38,106.62 412.71,108.32 413.04,107.72 413.37,107.53 413.70,106.79 414.03,111.34 414.36,110.67 414.69,107.99 415.02,105.93 415.35,106.57 415.68,108.71 416.01,101.67 416.34,107.42 416.67,109.48 417.00,106.57 417.33,106.11 417.66,109.27 417.99,106.09 418.32,107.80 418.65,106.62 418.98,107.93 419.31,107.58 419.64,107.46 419.97,106.77 420.30,106.64 420.63,106.47 420.96,108.52 421.29,110.18 421.62,103.66 421.95,103.55 422.28,103.72 422.61,108.93 422.94,108.65 423.27,106.26 423.60,107.91 423.93,108.30 424.26,108.49 424.59,107.40 424.92,109.70 425.25,105.25 425.58,110.34 425.91,108.17 426.24,108.82 426.57,110.38 426.90,106.08 427.23,106.57 427.56,103.31 427.89,106.70 428.22,107.75 428.55,110.36 428.88,105.94 429.21,106.31 429.54,107.27 429.87,105.90 430.20,108.30 430.53,115.70 430.86,109.37 431.19,107.57 431.52,107.43 431.85,106.52 432.18,103.87 432.51,105.21 432.84,106.41 433.17,105.41 433.50,108.01 433.83,108.70 434.16,104.57 434.49,105.38 434.82,107.02 435.15,103.12 435.48,102.85 435.81,104.89 436.14,104.59 436.47,104.53 436.80,105.33 437.13,103.87 437.46,106.15 437.79,109.59 438.12,106.66 438.45,108.07 438.78,108.77 439.11,107.37 439.44,105.55 439.77,106.65 440.10,105.62 440.43,108.15 440.76,110.75 441.09,103.57 441.42,103.91 441.75,102.85 442.08,104.32 442.41,105.83 442.74,107.06 443.07,104.04 443.40,105.21 443.73,106.84 444.06,105.16 444.39,102.66 444.72,106.86 445.05,106.64 445.38,106.10 445.71,109.22 446.04,106.76 446.37,107.03 446.70,100.50 447.03,106.65 447.36,109.98 447.69,110.44 448.02,110.06 448.35,106.28 448.68,108.63 449.01,103.84 449.34,108.72 449.67,109.79 450.00,103.13 450.33,110.50 450.66,107.57 450.99,108.66 451.32,103.13 451.65,110.39 451.98,108.48 452.31,104.57 452.64,104.49 452.97,107.48 453.30,109.13 453.63,105.78 453.96,110.62 454.29,107.96 454.62,107.03 454.95,107.76 455.28,107.34 455.61,106.09 455.94,105.77 456.27,103.77 456.60,104.17 456.93,109.26 457.26,104.05 457.59,106.60 457.92,104.98 458.25,108.23 458.58,105.57 458.91,106.29 459.24,105.41 459.57,104.05 459.90,108.25 460.23,104.39 460.56,105.78 460.89,105.96 461.22,107.33 461.55,108.39 461.88,105.03 462.21,115.07 462.54,108.03 462.87,108.23 463.20,110.63 463.53,107.92 463.86,105.74 464.19,109.26 464.52,106.34 464.85,104.68 465.18,104.80 465.51,104.66 465.84,107.60 466.17,110.98 466.50,107.77 466.83,106.93 467.16,106.43 467.49,104.87 467.82,108.12 468.15,110.07 468.48,107.52 468.81,108.48 469.14,111.26 469.47,105.57 469.80,110.98 470.13,107.33 470.46,108.46 470.79,106.54 471.12,110.11 471.45,107.58 471.78,108.72 472.11,105.47 472.44,110.85 472.77,106.42 473.10,104.39 473.43,103.08 473.76,107.49 474.09,103.82 474.42,109.47 474.75,109.07 475.08,109.99 475.41,108.79 475.74,105.65 476.07,114.01 476.40,104.48 476.73,110.26 477.06,102.95 477.39,105.03 477.72,106.23 478.05,103.10 478.38,106.53 478.71,104.80 479.04,104.72 479.37,106.33 479.70,107.86 480.03,104.91 480.36,112.37 480.69,103.11 481.02,107.91 481.35,107.63 481.68,108.89 482.01,103.97 482.34,104.03 482.67,104.99 483.00,106.80 483.33,107.15 483.66,106.01 483.99,107.27 484.32,109.49 484.65,106.63 484.98,107.54 485.31,106.25 485.64,113.69 485.97,103.56 486.30,105.03 486.63,105.59 486.96,109.81 487.29,105.37 487.62,109.97 487.95,107.58 488.28,109.02 488.61,106.24 488.94,106.60 489.27,107.80 489.60,107.29 489.93,103.20 490.26,106.65 490.59,107.22 490.92,107.44 491.25,103.57 491.58,107.79 491.91,105.46 492.24,108.30 492.57,109.09 492.90,109.62 493.23,105.42 493.56,107.28 493.89,106.82 494.22,104.18 494.55,108.16 494.88,106.98 495.21,107.47 495.54,105.34 495.87,104.90 496.20,109.33 496.53,107.29 496.86,102.91 497.19,106.74 497.52,104.56 497.85,108.90 498.18,105.29 498.51,107.43 498.84,107.48 499.17,108.80 499.50,109.96 499.83,108.86 500.16,103.22 500.49,107.44 500.82,108.55 501.15,107.64 501.48,105.80 501.81,106.67 502.14,104.89 502.47,103.53 502.80,109.84 503.13,107.54 503.46,105.39 503.79,106.03 504.12,106.08 504.45,107.37 504.78,105.77 505.11,107.16 505.44,105.55 505.77,108.72 506.10,106.91 506.43,104.43 506.76,109.29 507.09,106.15 507.42,108.36 507.75,107.78 508.08,105.33 508.41,107.51 508.74,115.13 509.07,106.77 509.40,103.77 509.73,107.61 510.06,106.35 510.39,106.09 510.72,104.09 511.05,110.19 511.38,111.67 511.71,107.69 512.04,105.71 512.37,107.70 512.70,102.14 513.03,106.64 513.36,107.68 513.69,105.84 514.02,106.11 514.35,111.88 514.68,107.60 515.01,106.01 515.34,105.82 515.67,108.02 516.00,108.08 516.33,106.99 516.66,110.24 516.99,108.79 517.32,108.93 517.65,109.68 517.98,109.22 518.31,102.26 518.64,107.50 518.97,107.60 519.30,105.12 519.63,105.92 519.96,104.47 520.29,106.65 520.62,110.18 520.95,103.13 521.28,108.36 521.61,104.21 521.94,108.90 522.27,105.96 522.60,105.27 522.93,107.38 523.26,105.05 523.59,106.47 523.92,105.30 524.25,108.60 524.58,108.81 524.91,108.56 525.24,105.28 525.57,107.51 525.90,108.16 526.23,104.15 526.56,105.86 526.89,105.79 527.22,107.23 527.55,105.09 527.88,104.16 528.21,107.83 528.54,101.64 528.87,108.34 529.20,108.96 529.53,107.45 529.86,108.08 530.19,108.45 530.52,106.96 530.85,107.67 531.18,106.49 531.51,105.52 531.84,108.74 532.17,111.26 532.50,104.61 532.83,109.10 533.16,105.88 533.49,106.33 533.82,109.46 534.15,108.63 534.48,109.21 534.81,108.78 535.14,106.92 535.47,106.51 535.80,106.00 536.13,104.42 536.46,106.92 536.79,108.17 537.12,110.44 537.45,106.09 537.78,104.53 538.11,106.45 538.44,107.33 538.77,107.96 539.10,103.60 539.43,106.37 539.76,106.95 540.09,109.97 540.42,107.25 540.75,105.09 541.08,108.74 541.41,106.73 541.74,109.86 542.07,107.64 542.40,108.90 542.73,106.88 543.06,105.51 543.39,110.38 543.72,108.10 544.05,104.06 544.38,111.01 544.71,109.61 545.04,108.45 545.37,110.35 545.70,106.97 546.03,102.55 546.36,109.36 546.69,107.41 547.02,105.74 547.35,109.98 547.68,108.45 548.01,107.00 548.34,113.00 548.67,108.62 549.00,106.12 549.33,109.63 549.66,105.49 549.99,104.00 550.32,106.60 550.65,106.48 550.98,105.22 551.31,106.95 551.64,106.68 551.97,106.41 552.30,110.10 552.63,103.11 552.96,110.06 553.29,102.35 553.62,108.69 553.95,104.24 554.28,107.37 554.61,106.74 554.94,108.82 555.27,104.80 555.60,108.99 555.93,105.29 556.26,104.34 556.59,110.55 556.92,106.71 557.25,107.10 557.58,109.63 557.91,105.71 558.24,106.60 558.57,106.82 558.90,103.71 559.23,106.68 559.56,103.80 559.89,110.55 560.22,105.46 560.55,107.89 560.88,107.00 561.21,106.70 561.54,104.73 561.87,106.30 562.20,109.34 562.53,107.35 562.86,109.34 563.19,105.95 563.52,105.76 563.85,106.07 564.18,107.18 564.51,107.12 564.84,106.91 565.17,109.41 565.50,104.26 565.83,105.36 566.16,109.40 566.49,103.13 566.82,110.23 567.15,108.51 567.48,108.81 567.81,106.97 568.14,104.66 568.47,108.49 568.80,107.61 569.13,108.63 569.46,109.28 569.79,106.61 570.12,107.75 570.45,107.96 570.78,105.72 571.11,108.67 571.44,110.93 571.77,105.04 572.10,105.47 572.43,107.69 572.76,108.17 573.09,108.51 573.42,104.42 573.75,111.06 574.08,112.99 574.41,104.84 574.74,109.50 575.07,107.31 575.40,106.92 575.73,111.38 576.06,106.78 576.39,106.78 576.72,106.43 577.05,107.55 577.38,107.41 577.71,109.10 578.04,108.56 578.37,108.99 578.70,109.27 579.03,107.58 579.36,107.45 579.69,107.94 580.02,105.55 580.35,109.72 580.68,104.01 581.01,110.71 581.34,105.17 581.67,108.18 582.00,109.14 582.33,110.65 582.66,103.87 582.99,103.98 583.32,106.60 583.65,107.16 583.98,110.36 584.31,108.05 584.64,105.57 584.97,105.13 585.30,104.98 585.63,109.39 585.96,104.39 586.29,107.34 586.62,108.38 586.95,109.08 587.28,106.79 587.61,109.74 587.94,107.74 588.27,106.61 588.60,103.09 588.93,105.06 589.26,107.16 589.59,106.08 589.92,106.77 590.25,105.48 590.58,106.76 590.91,105.63 591.24,113.00 591.57,104.54 591.90,103.16 592.23,108.08 592.56,106.99 592.89,105.88 593.22,106.94 593.55,105.94 593.88,109.23 594.21,107.47 594.54,104.81 594.87,107.50 595.20,107.43 595.53,108.00 595.86,106.38 596.19,108.02 596.52,108.21 596.85,106.26 597.18,105.32 597.51,105.19 597.84,108.04 598.17,104.16 598.50,111.40 598.83,105.93 599.16,107.54 599.49,107.94 599.82,103.81 600.15,105.87 600.48,112.48 600.81,105.59 601.14,102.92 601.47,106.49 601.80,107.83 602.13,102.35 602.46,109.86 602.79,106.23 603.12,106.21 603.45,103.96 603.78,104.06 604.11,106.72 604.44,108.06 604.77,107.77 605.10,108.38 605.43,107.85 605.76,106.39 606.09,104.61 606.42,107.22 606.75,108.36 607.08,106.10 607.41,105.25 607.74,103.65 608.07,108.72 608.40,107.47 608.73,107.07 609.06,105.68 609.39,108.38 609.72,107.60 610.05,107.98 610.38,106.18 610.71,106.63 611.04,115.74 611.37,108.10 611.70,108.36 612.03,102.30 612.36,109.42 612.69,105.74 613.02,109.45 613.35,108.53 613.68,107.04 614.01,108.16 614.34,102.43 614.67,107.52 615.00,108.05"/>
  <polyline points="617.08,148.64 617.24,149.65 617.40,150.71 617.56,151.90 617.72,152.94 617.88,154.06 618.04,155.15 618.20,155.83 618.36,156.65 618.52,157.44 618.68,158.06 618.84,158.98 619.00,159.56 619.16,160.51 619.32,161.29 619.48,161.93 619.64,162.23 619.80,163.02 619.96,163.39 620.12,164.41 620.28,164.27 620.44,165.48 620.60,166.13 620.76,166.51 620.92,167.14 621.08,166.75 621.24,168.11 621.40,167.82 621.56,168.85 621.72,169.19 621.88,168.33 622.04,169.82 622.20,170.35 622.36,169.18 622.52,169.88 622.68,171.26 622.84,170.25 623.00,172.20 623.16,171.07 623.32,171.18 623.48,173.25 623.64,171.80 623.80,172.13 623.96,172.10 624.12,174.36 624.28,174.57 624.44,174.64 624.60,174.22 624.76,173.58 624.92,174.82 625.08,175.91 625.24,176.38 625.40,174.59 625.56,174.45 625.72,176.17 625.88,176.99 626.04,174.89 626.20,174.82 626.36,175.52 626.52,178.57 626.68,178.02 626.84,174.75 627.00,176.12 627.16,177.18 627.32,179.54 627.48,176.68 627.64,175.39 627.80,177.35 627.96,177.49 628.12,179.30 628.28,177.19 628.44,178.52 628.60,181.02 628.76,177.37 628.92,180.34 629.08,181.06 629.24,177.45 629.40,180.84 629.56,178.71 629.72,179.36 629.88,181.70 630.04,182.48 630.20,180.91 630.36,178.84 630.52,183.36 630.68,181.53 630.84,178.83 631.00,182.22 631.16,182.56 631.32,179.29 631.48,179.96 631.64,184.14 631.80,184.36 631.96,184.31 632.12,181.54 632.28,181.55 632.44,179.82 632.60,179.67 632.76,184.72 632.92,185.33 633.08,180.96 633.24,182.20 633.40,183.78 633.56,184.91 633.72,181.28 633.88,180.55 634.04,181.64 634.20,186.88 634.36,182.27 634.52,182.36 634.68,186.95 634.84,186.00 635.00,187.39 635.16,186.88 635.32,187.03 635.48,186.47 635.64,182.76 635.80,186.02 635.96,187.56 636.12,181.69 636.28,187.78 636.44,181.14 636.60,181.98 636.76,186.54 636.92,187.21 637.08,186.38 637.24,187.75 637.40,188.15 637.56,188.12 637.72,188.52 637.88,183.28 638.04,182.62 638.20,188.17 638.36,188.31 638.52,183.99 638.68,183.18 638.84,183.73 639.00,184.63 639.16,184.13 639.32,188.22 639.48,184.63 639.64,186.60 639.80,188.46 639.96,185.46 640.12,188.86 640.28,188.56 640.44,184.46 640.60,183.95 640.76,183.23 640.92,184.54 641.08,191.46 641.24,186.70 641.40,189.38 641.56,186.88 641.72,189.64 641.88,190.17 642.04,184.96 642.20,187.19 642.36,188.81 642.52,189.69 642.68,189.74 642.84,185.98 643.00,186.29 643.16,184.74 643.32,184.54 643.48,185.65 643.64,187.83 643.80,190.53 643.96,187.15 644.12,190.03 644.28,189.48 644.44,186.30 644.60,190.60 644.76,190.17 644.92,187.24 645.08,189.26 645.24,187.57 645.40,186.13 645.56,186.51 645.72,190.96 645.88,185.90 646.04,186.81 646.20,186.02 646.36,186.20 646.52,190.66 646.68,191.76 646.84,187.42 647.00,191.14 647.16,187.91 647.32,190.38 647.48,186.63 647.64,185.94 647.80,191.37 647.96,189.16 648.12,188.49 648.28,190.45 648.44,191.32 648.60,188.33 648.76,191.47 648.92,187.19 649.08,192.17 649.24,191.36 649.40,191.29 649.56,188.85 649.72,191.08 649.88,188.64 650.04,191.68 650.20,187.70 650.36,189.11 650.52,188.76 650.68,192.89 650.84,191.60 651.00,188.77 651.16,193.22 651.32,190.90 651.48,192.48 651.64,190.72 651.80,191.34 651.96,192.31 652.12,191.90 652.28,190.95 652.44,193.51 652.60,192.33 652.76,192.79 652.92,193.78 653.08,187.69 653.24,188.92 653.40,189.64 653.56,192.58 653.72,188.74 653.88,192.87 654.04,191.39 654.20,193.22 654.36,188.59 654.52,193.15 654.68,192.39 654.84,191.88 655.00,194.05 655.16,192.50 655.32,193.48 655.48,189.20 655.64,188.41 655.80,189.61 655.96,189.13 656.12,189.09 656.28,187.70 656.44,193.20 656.60,189.13 656.76,190.82 656.92,192.79 657.08,189.87 657.24,193.98 657.40,193.89 657.56,193.71 657.72,193.96 657.88,186.93 658.04,194.52 658.20,189.43 658.36,188.95 658.52,193.84 658.68,189.05 658.84,193.96 659.00,194.44 659.16,193.97 659.32,194.50 659.48,194.29 659.64,193.59 659.80,193.88 659.96,194.57 660.12,189.83 660.28,189.26 660.44,188.95 660.60,189.34 660.76,191.87 660.92,195.83 661.08,194.57 661.24,192.98 661.40,194.63 661.56,191.04 661.72,189.24 661.88,194.29 662.04,193.48 662.20,195.15 662.36,195.38 662.52,191.88 662.68,189.24 662.84,193.73 663.00,194.99 663.16,191.85 663.32,194.63 663.48,191.50 663.64,193.31 663.80,190.61 663.96,191.33 664.12,190.55 664.28,195.68 664.44,194.92 664.60,190.88 664.76,193.78 664.92,194.97 665.08,194.68 665.24,193.49 665.40,190.07 665.56,190.36 665.72,194.07 665.88,195.11 666.04,194.13 666.20,194.25 666.36,194.05 666.52,190.59 666.68,192.18 666.84,190.13 667.00,189.88 667.16,195.82 667.32,191.54 667.48,195.29 667.64,190.95 667.80,191.98 667.96,192.08 668.12,196.01 668.28,194.06 668.44,190.39 668.60,194.16 668.76,191.94 668.92,191.86 669.08,196.14 669.24,192.68 669.40,190.44 669.56,190.95 669.72,188.71 669.88,195.04 670.04,196.37 670.20,195.99 670.36,190.21 670.52,191.21 670.68,190.97 670.84,195.63 671.00,196.03 671.16,190.57 671.32,195.36 671.48,196.41 671.64,196.56 671.80,188.94 671.96,195.09 672.12,190.67 672.28,195.58 672.44,196.22 672.60,190.64 672.76,194.64 672.92,195.35 673.08,195.98 673.24,195.18 673.40,192.58 673.56,195.97 673.72,195.97 673.88,191.81 674.04,196.81 674.20,196.20 674.36,194.99 674.52,196.25 674.68,191.96 674.84,196.52 675.00,195.54 675.16,196.57 675.32,190.99 675.48,191.77 675.64,194.94 675.80,196.58 675.96,196.36 676.12,196.52 676.28,191.88 676.44,196.27 676.60,196.75 676.76,191.05 676.92,196.26 677.08,196.04 677.24,191.75 677.40,195.67 677.56,191.64 677.72,196.09 677.88,193.28 678.04,196.38 678.20,191.81 678.36,196.81 678.52,194.52 678.68,195.18 678.84,191.67 679.00,195.92 679.16,195.02 679.32,194.52 679.48,191.08 679.64,192.71 679.80,195.57 679.96,191.58 680.12,192.56 680.28,189.64 680.44,197.33 680.60,193.81 680.76,192.14 680.92,193.19 681.08,196.42 681.24,197.29 681.40,191.19 681.56,191.81 681.72,191.26 681.88,196.95 682.04,197.28 682.20,191.35 682.36,193.07 682.52,197.36 682.68,195.27 682.84,197.37 683.00,193.09 683.16,191.83 683.32,197.55 683.48,191.34 683.64,192.86 683.80,197.23 683.96,191.41 684.12,196.34 684.28,197.59 684.44,191.85 684.60,197.43 684.76,192.63 684.92,196.65 685.08,192.79 685.24,191.82 685.40,192.02 685.56,191.92 685.72,191.39 685.88,192.17 686.04,197.47 686.20,197.50 686.36,197.32 686.52,193.75 686.68,197.51 686.84,196.01 687.00,192.99 687.16,194.12 687.32,192.01 687.48,191.66 687.64,195.48 687.80,197.32 687.96,193.53 688.12,192.66 688.28,193.03 688.44,194.40 688.60,197.50 688.76,197.82 688.92,197.49 689.08,192.42 689.24,192.80 689.40,192.39 689.56,197.91 689.72,197.65 689.88,192.86 690.04,191.79 690.20,192.90 690.36,191.65 690.52,193.18 690.68,191.61 690.84,195.36 691.00,193.88 691.16,192.56 691.32,192.20 691.48,197.06 691.64,192.48 691.80,192.01 691.96,194.68 692.12,192.55 692.28,196.78 692.44,195.99 692.60,191.96 692.76,193.76 692.92,191.94 693.08,193.29 693.24,197.59 693.40,191.81 693.56,194.45 693.72,192.94 693.88,197.47 694.04,192.46 694.20,196.70 694.36,195.46 694.52,195.41 694.68,196.94 694.84,197.68 695.00,196.94 695.16,197.16 695.32,197.73 695.48,194.85 695.64,195.67 695.80,191.96 695.96,192.84 696.12,192.31 696.28,198.63 696.44,192.30 696.60,191.67 696.76,196.34 696.92,195.64 697.08,192.36 697.24,197.09 697.40,192.46 697.56,195.23 697.72,192.47 697.88,192.55 698.04,197.83 698.20,196.21 698.36,192.69 698.52,198.18 698.68,194.17 698.84,195.78 699.00,198.22 699.16,193.63 699.32,193.62 699.48,198.40 699.64,198.13 699.80,197.86 699.96,195.72 700.12,198.24 700.28,194.26 700.44,193.85 700.60,192.39 700.76,195.61 700.92,192.69 701.08,197.57 701.24,196.78 701.40,198.07 701.56,192.28 701.72,193.32 701.88,193.36 702.04,198.25 702.20,193.25 702.36,194.41 702.52,193.45 702.68,196.91 702.84,196.55 703.00,195.75 703.16,194.75 703.32,192.80 703.48,192.73 703.64,194.23 703.80,193.26 703.96,196.17 704.12,196.70 704.28,196.97 704.44,197.32 704.60,196.21 704.76,194.82 704.92,193.28 705.08,195.78 705.24,197.05 705.40,193.91 705.56,193.28 705.72,195.17 705.88,198.61 706.04,197.68 706.20,192.53 706.36,194.57 706.52,194.17 706.68,197.51 706.84,193.25 707.00,197.54 707.16,193.86 707.32,197.20 707.48,198.08 707.64,195.94 707.80,197.58 707.96,194.98 708.12,197.41 708.28,192.84 708.44,192.34 708.60,196.64 708.76,198.59 708.92,194.46 709.08,198.23 709.24,194.18 709.40,194.83 709.56,193.67 709.72,196.41 709.88,193.84 710.04,198.15 710.20,194.71 710.36,193.75 710.52,196.61 710.68,192.74 710.84,193.88 711.00,198.12 711.16,193.26 711.32,199.72 711.48,192.59 711.64,195.47 711.80,197.84 711.96,198.81 712.12,196.05 712.28,194.33 712.44,196.81 712.60,198.63 712.76,196.17 712.92,194.25 713.08,196.56 713.24,198.37 713.40,195.29 713.56,197.05 713.72,194.07 713.88,198.10 714.04,193.93 714.20,198.15 714.36,192.93 714.52,197.48 714.68,198.85 714.84,194.64 715.00,193.80 715.16,195.90 715.32,193.27 715.48,196.95 715.64,198.89 715.80,192.69 715.96,198.02 716.12,198.33 716.28,193.91 716.44,196.85 716.60,193.37 716.76,196.58 716.92,197.29 717.08,198.94 717.24,194.62 717.40,193.21 717.56,193.00 717.72,193.28 717.88,198.24 718.04,198.17 718.20,192.63 718.36,194.07 718.52,194.26 718.68,193.77 718.84,198.62 719.00,194.25 719.16,194.49 719.32,198.57 719.48,198.86 719.64,197.18 719.80,192.80 719.96,198.44 720.12,198.63 720.28,194.01 720.44,198.89 720.60,198.85 720.76,194.56 720.92,193.60 721.08,198.56 721.24,198.19 721.40,193.39 721.56,193.46 721.72,193.98 721.88,193.15 722.04,194.57 722.20,192.95 722.36,198.37 722.52,193.76 722.68,193.97 722.84,192.85 723.00,194.31 723.16,197.80 723.32,193.91 723.48,193.25 723.64,198.45 723.80,193.39 723.96,197.91 724.12,198.98 724.28,198.96 724.44,193.73 724.60,193.29 724.76,193.90 724.92,197.09 725.08,193.84 725.24,193.68 725.40,193.28 725.56,196.71 725.72,198.21 725.88,197.59 726.04,194.21 726.20,193.14 726.36,198.59 726.52,197.64 726.68,196.93 726.84,196.06 727.00,193.08 727.16,193.80 727.32,197.97 727.48,194.84 727.64,198.27 727.80,198.67 727.96,193.18 728.12,197.78 728.28,194.51 728.44,197.67 728.60,193.94 728.76,194.53 728.92,193.63 729.08,198.93 729.24,198.00 729.40,193.04 729.56,193.72 729.72,194.74 729.88,194.31 730.04,193.65 730.20,197.09"/>
  <polyline points="318.96,150.73 319.12,149.83 319.28,147.99 319.44,146.16 319.60,144.39 319.76,142.76 319.92,141.00 320.08,138.16 320.24,134.87 320.40,131.47 320.56,127.84 320.72,124.49 320.88,119.76 321.04,115.38 321.20,110.85" stroke-width="0.7" stroke="#e6e224"/>
  <polyline points="615.00,108.05 615.16,113.37 615.32,118.84 615.48,124.36 615.64,128.32 615.80,132.26 615.96,136.01 616.12,138.29 616.28,139.96 616.44,141.89 616.60,143.59 616.76,145.28 616.92,147.20 617.08,148.64" stroke-width="0.7" stroke="#e6e224"/>
  </g>
  <g font-size="5.1" fill="#dcdcdc">
<text x="264.77" y="218" text-anchor="middle">-6</text>
<text x="332.83" y="218" text-anchor="middle">-4</text>
<text x="400.89" y="218" text-anchor="middle">-2</text>
<text x="468.95" y="218" text-anchor="middle">0</text>
<text x="537.01" y="218" text-anchor="middle">2</text>
<text x="605.07" y="218" text-anchor="middle">4</text>
<text x="673.13" y="218" text-anchor="middle">6</text>
<text x="205.6" y="116.70" text-anchor="end">-30</text>
<text x="205.6" y="145.00" text-anchor="end">-40</text>
<text x="205.6" y="173.30" text-anchor="end">-50</text>
<text x="205.6" y="201.60" text-anchor="end">-60</text>
    <text x="469" y="225.2" text-anchor="middle">Frequency (MHz)</text>
    <text transform="translate(193.8 150) rotate(-90)" text-anchor="middle">dBm</text>
  </g>
</svg>
<div id="stat1"><span class="l">Stopped</span><span class="r">RBW = 15.0000 kHz&nbsp; Sample Rate = 15.3600 MHz&nbsp; Frames = 100&nbsp; T = 0.00999993</span></div>

<!-- right: resource grid -->
<div id="rtab2"></div>
<div id="tabRG"><span class="t">Resource Grid (BWP#1)</span></div>
<div class="gear" style="left:726.9px;top:243px"></div>
<svg width="740" height="420" viewBox="0 0 740 420">
  <rect x="257.6" y="263.2" width="428.8" height="126.2" fill="#17bdb4"/>
<rect x="257.95" y="357.81" width="2.60" height="31.58" fill="none" stroke="#a9cf7c" stroke-width="0.7"/>
<rect x="257.60" y="373.62" width="3.30" height="15.77" fill="#e6c12f"/>
<rect x="279.39" y="357.81" width="2.60" height="31.58" fill="none" stroke="#a9cf7c" stroke-width="0.7"/>
<rect x="279.04" y="373.62" width="3.30" height="15.77" fill="#e6c12f"/>
<rect x="300.83" y="357.81" width="2.60" height="31.58" fill="none" stroke="#a9cf7c" stroke-width="0.7"/>
<rect x="300.48" y="373.62" width="3.30" height="15.77" fill="#e6c12f"/>
<rect x="322.27" y="357.81" width="2.60" height="31.58" fill="none" stroke="#a9cf7c" stroke-width="0.7"/>
<rect x="321.92" y="373.62" width="3.30" height="15.77" fill="#e6c12f"/>
<rect x="343.71" y="357.81" width="2.60" height="31.58" fill="none" stroke="#a9cf7c" stroke-width="0.7"/>
<rect x="343.36" y="373.62" width="3.30" height="15.77" fill="#e6c12f"/>
<rect x="365.15" y="357.81" width="2.60" height="31.58" fill="none" stroke="#a9cf7c" stroke-width="0.7"/>
<rect x="364.80" y="373.62" width="3.30" height="15.77" fill="#e6c12f"/>
<rect x="386.59" y="357.81" width="2.60" height="31.58" fill="none" stroke="#a9cf7c" stroke-width="0.7"/>
<rect x="386.24" y="373.62" width="3.30" height="15.77" fill="#e6c12f"/>
<rect x="408.03" y="357.81" width="2.60" height="31.58" fill="none" stroke="#a9cf7c" stroke-width="0.7"/>
<rect x="407.68" y="373.62" width="3.30" height="15.77" fill="#e6c12f"/>
<rect x="429.47" y="357.81" width="2.60" height="31.58" fill="none" stroke="#a9cf7c" stroke-width="0.7"/>
<rect x="429.12" y="373.62" width="3.30" height="15.77" fill="#e6c12f"/>
<rect x="450.91" y="357.81" width="2.60" height="31.58" fill="none" stroke="#a9cf7c" stroke-width="0.7"/>
<rect x="450.56" y="373.62" width="3.30" height="15.77" fill="#e6c12f"/>
<rect x="472.35" y="357.81" width="2.60" height="31.58" fill="none" stroke="#a9cf7c" stroke-width="0.7"/>
<rect x="472.00" y="373.62" width="3.30" height="15.77" fill="#e6c12f"/>
<rect x="493.79" y="357.81" width="2.60" height="31.58" fill="none" stroke="#a9cf7c" stroke-width="0.7"/>
<rect x="493.44" y="373.62" width="3.30" height="15.77" fill="#e6c12f"/>
<rect x="515.23" y="357.81" width="2.60" height="31.58" fill="none" stroke="#a9cf7c" stroke-width="0.7"/>
<rect x="514.88" y="373.62" width="3.30" height="15.77" fill="#e6c12f"/>
<rect x="536.67" y="357.81" width="2.60" height="31.58" fill="none" stroke="#a9cf7c" stroke-width="0.7"/>
<rect x="536.32" y="373.62" width="3.30" height="15.77" fill="#e6c12f"/>
<rect x="558.11" y="357.81" width="2.60" height="31.58" fill="none" stroke="#a9cf7c" stroke-width="0.7"/>
<rect x="557.76" y="373.62" width="3.30" height="15.77" fill="#e6c12f"/>
<rect x="579.55" y="357.81" width="2.60" height="31.58" fill="none" stroke="#a9cf7c" stroke-width="0.7"/>
<rect x="579.20" y="373.62" width="3.30" height="15.77" fill="#e6c12f"/>
<rect x="600.99" y="357.81" width="2.60" height="31.58" fill="none" stroke="#a9cf7c" stroke-width="0.7"/>
<rect x="600.64" y="373.62" width="3.30" height="15.77" fill="#e6c12f"/>
<rect x="622.43" y="357.81" width="2.60" height="31.58" fill="none" stroke="#a9cf7c" stroke-width="0.7"/>
<rect x="622.08" y="373.62" width="3.30" height="15.77" fill="#e6c12f"/>
<rect x="643.87" y="357.81" width="2.60" height="31.58" fill="none" stroke="#a9cf7c" stroke-width="0.7"/>
<rect x="643.52" y="373.62" width="3.30" height="15.77" fill="#e6c12f"/>
<rect x="665.31" y="357.81" width="2.60" height="31.58" fill="none" stroke="#a9cf7c" stroke-width="0.7"/>
<rect x="664.96" y="373.62" width="3.30" height="15.77" fill="#e6c12f"/>
<rect x="257.60" y="373.62" width="1.1" height="15.77" fill="#ee9a3a"/>
  <g stroke="#163634" stroke-width="0.5">
<line x1="257.60" y1="389.4" x2="257.60" y2="385.4"/>
<line x1="257.60" y1="263.2" x2="257.60" y2="267.2"/>
<line x1="300.48" y1="389.4" x2="300.48" y2="385.4"/>
<line x1="300.48" y1="263.2" x2="300.48" y2="267.2"/>
<line x1="343.36" y1="389.4" x2="343.36" y2="385.4"/>
<line x1="343.36" y1="263.2" x2="343.36" y2="267.2"/>
<line x1="386.24" y1="389.4" x2="386.24" y2="385.4"/>
<line x1="386.24" y1="263.2" x2="386.24" y2="267.2"/>
<line x1="429.12" y1="389.4" x2="429.12" y2="385.4"/>
<line x1="429.12" y1="263.2" x2="429.12" y2="267.2"/>
<line x1="472.00" y1="389.4" x2="472.00" y2="385.4"/>
<line x1="472.00" y1="263.2" x2="472.00" y2="267.2"/>
<line x1="514.88" y1="389.4" x2="514.88" y2="385.4"/>
<line x1="514.88" y1="263.2" x2="514.88" y2="267.2"/>
<line x1="557.76" y1="389.4" x2="557.76" y2="385.4"/>
<line x1="557.76" y1="263.2" x2="557.76" y2="267.2"/>
<line x1="600.64" y1="389.4" x2="600.64" y2="385.4"/>
<line x1="600.64" y1="263.2" x2="600.64" y2="267.2"/>
<line x1="643.52" y1="389.4" x2="643.52" y2="385.4"/>
<line x1="643.52" y1="263.2" x2="643.52" y2="267.2"/>
<line x1="686.40" y1="389.4" x2="686.40" y2="385.4"/>
<line x1="686.40" y1="263.2" x2="686.40" y2="267.2"/>
<line x1="257.6" y1="386.80" x2="261.6" y2="386.80"/>
<line x1="686.4" y1="386.80" x2="682.4" y2="386.80"/>
<line x1="257.6" y1="360.45" x2="261.6" y2="360.45"/>
<line x1="686.4" y1="360.45" x2="682.4" y2="360.45"/>
<line x1="257.6" y1="334.10" x2="261.6" y2="334.10"/>
<line x1="686.4" y1="334.10" x2="682.4" y2="334.10"/>
<line x1="257.6" y1="307.75" x2="261.6" y2="307.75"/>
<line x1="686.4" y1="307.75" x2="682.4" y2="307.75"/>
<line x1="257.6" y1="281.40" x2="261.6" y2="281.40"/>
<line x1="686.4" y1="281.40" x2="682.4" y2="281.40"/>
  </g>
  <rect x="257.6" y="263.2" width="428.8" height="126.2" fill="none" stroke="#20403e" stroke-width="0.6"/>
  <g font-size="5.6" fill="#3c3c3c">
<text x="257.60" y="397.6" text-anchor="middle">0</text>
<text x="300.48" y="397.6" text-anchor="middle">2</text>
<text x="343.36" y="397.6" text-anchor="middle">4</text>
<text x="386.24" y="397.6" text-anchor="middle">6</text>
<text x="429.12" y="397.6" text-anchor="middle">8</text>
<text x="472.00" y="397.6" text-anchor="middle">10</text>
<text x="514.88" y="397.6" text-anchor="middle">12</text>
<text x="557.76" y="397.6" text-anchor="middle">14</text>
<text x="600.64" y="397.6" text-anchor="middle">16</text>
<text x="643.52" y="397.6" text-anchor="middle">18</text>
<text x="686.40" y="397.6" text-anchor="middle">20</text>
<text x="255.4" y="388.90" text-anchor="end">0</text>
<text x="255.4" y="362.55" text-anchor="end">5</text>
<text x="255.4" y="336.20" text-anchor="end">10</text>
<text x="255.4" y="309.85" text-anchor="end">15</text>
<text x="255.4" y="283.50" text-anchor="end">20</text>
    <text x="472.8" y="406.6" text-anchor="middle" font-size="6.4">Slots</text>
    <text transform="translate(245.1 325.8) rotate(-90)" text-anchor="middle" font-size="6.6">Carrier RB</text>
  </g>
  <text x="472.6" y="259.8" text-anchor="middle" font-size="6.95" font-weight="bold" fill="#111">BWP 1 in Carrier (SCS = 30 kHz)</text>
  <!-- legend -->
  <rect x="629.4" y="268.6" width="51.8" height="37.4" fill="#fff" stroke="#6a8a88" stroke-width="0.35"/>
  <rect x="638" y="270.2" width="4.3" height="4" fill="#f1a673"/>
  <rect x="638" y="277.9" width="4.3" height="4" fill="#2eb3a4"/>
  <rect x="638" y="285.4" width="4.3" height="4" fill="#fdf6e0" stroke="#f3c48c" stroke-width="0.5"/>
  <rect x="638" y="292.9" width="4.3" height="4" fill="#3b93cf"/>
  <rect x="638" y="300.2" width="4.3" height="4" fill="#f6bb3e"/>
  <g font-size="5.45" fill="#262626" stroke="#444" stroke-width="0.1">
    <text x="652" y="274">PDCCH</text>
    <text x="652" y="282">PDSCH</text>
    <text x="652" y="290">CORESET</text>
    <text x="652" y="297">SS Burst</text>
    <text x="652" y="304">CSI-RS</text>
  </g>
</svg>
<div id="stat2"><span class="l">Completed generation of NR Test Models waveform.</span></div>
<div id="prog"></div>
<div id="bottomline"></div>
</div>
</body>
</html>
